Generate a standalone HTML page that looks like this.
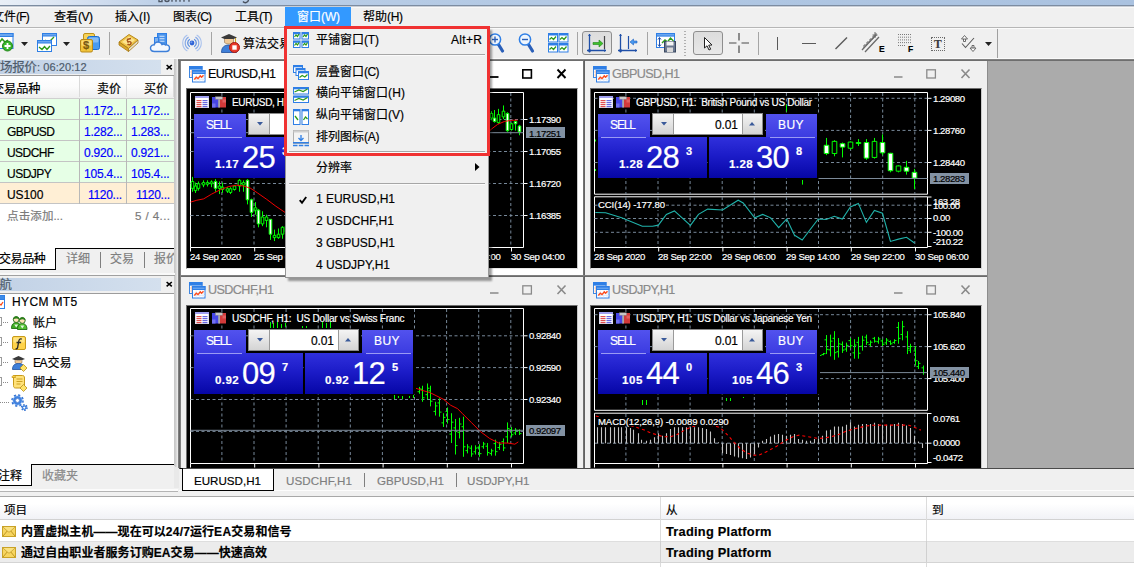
<!DOCTYPE html>
<html><head><meta charset="utf-8"><title>MetaTrader 5</title><style>
*{margin:0;padding:0;box-sizing:border-box}
html,body{width:1134px;height:567px;overflow:hidden;background:#f0f0f0}
body{font-family:"Liberation Sans","Noto Sans CJK SC",sans-serif;font-size:12px;color:#000;position:relative}
#root{position:absolute;left:0;top:0;width:1134px;height:567px;overflow:hidden;background:#f0f0f0}
.a{position:absolute;display:block}
.x{position:absolute;display:block;overflow:visible;white-space:pre;fill:currentColor;color:#000}
.x text{stroke:currentColor;stroke-width:.18px}
.x text{white-space:pre}
svg{overflow:visible}
</style></head>
<body><div id="root">
<div class="a" style="left:0px;top:0px;width:1134px;height:6px;background:linear-gradient(to right,#e9eff7 0,#dfe8f4 4%,#cfdcee 9%,#bdd0e8 14%,#b6cbe5 35%,#b0c7e3 60%,#aac2e0 100%);"></div><svg class="a" style="left:0px;top:0px;" width="300" height="6" viewBox="0 0 300 6"><path d="M159 0v1.600h3v-1.600M165 0c0 2 4 2 4 0M172 0v1.800M176 0v1.800M180 0v1.800M184 0v1.800M189 0v1.800" stroke="#2a2f3a" stroke-width="1.400" fill="none" opacity=".75"/><path d="M243 1.500c1.500 1.800 5 1.500 5.500-1.500" stroke="#2a2f3a" stroke-width="1.500" fill="none" opacity=".8"/></svg><div class="a" style="left:0px;top:5px;width:1134px;height:1px;background:#7c8ca1;"></div><div class="a" style="left:0px;top:6px;width:1134px;height:21px;background:#f0f0f0;"></div><div class="a" style="left:0px;top:6px;width:1134px;height:1px;background:#c9ced6;"></div><div class="a" style="left:0px;top:7px;width:1134px;height:1px;background:#f8f8f8;"></div><div class="a" style="left:0px;top:27px;width:1134px;height:1px;background:#b6b6b6;"></div><div class="a" style="left:285px;top:6.5px;width:66px;height:20.5px;background:#3399ff;"></div><svg class="x" style="left:-7.8px;top:21.1px;font-size:12px;" width="37.8" height="1"><text x="0" textLength="24">文件</text><text x="24" textLength="13.8">(F)</text></svg><svg class="x" style="left:53.7px;top:21.1px;font-size:12px;" width="38.9" height="1"><text x="0" textLength="24">查看</text><text x="24" textLength="14.9">(V)</text></svg><svg class="x" style="left:115.1px;top:21.1px;font-size:12px;" width="35.2" height="1"><text x="0" textLength="24">插入</text><text x="24" textLength="11.2">(I)</text></svg><svg class="x" style="left:173.3px;top:21.1px;font-size:12px;" width="39.1" height="1"><text x="0" textLength="24">图表</text><text x="24" textLength="15.1">(C)</text></svg><svg class="x" style="left:235.4px;top:21.1px;font-size:12px;" width="37.6" height="1"><text x="0" textLength="24">工具</text><text x="24" textLength="13.6">(T)</text></svg><svg class="x" style="left:296.5px;top:21.1px;font-size:12px;color:#fff;" width="43.1" height="1"><text x="0" textLength="24">窗口</text><text x="24" textLength="19.1">(W)</text></svg><svg class="x" style="left:362.5px;top:21.1px;font-size:12px;" width="40.1" height="1"><text x="0" textLength="24">帮助</text><text x="24" textLength="16.1">(H)</text></svg><div class="a" style="left:0px;top:28px;width:1134px;height:30px;background:#f0f0f0;"></div><div class="a" style="left:0px;top:28px;width:1134px;height:1px;background:#fbfbfb;"></div><div class="a" style="left:0px;top:58px;width:1134px;height:1px;background:#fafafa;"></div><svg class="a" style="left:0px;top:32px;overflow:hidden;" width="15" height="21" viewBox="0 0 15 21"><rect x="-8.500" y="1.500" width="21.500" height="15" fill="#fff" stroke="#2f7fe6"/><rect x="-8.500" y="1.500" width="21.500" height="3" fill="#6aa6ee" stroke="#2f7fe6"/><path d="M-7 12L-4 8L-1 11L2 7L5 10L8 8" stroke="#2d9a1a" stroke-width="1.500" fill="none"/><circle cx="7.500" cy="14" r="5" fill="#37b62a" stroke="#1f8417"/><path d="M7.500 11v6M4.500 14h6" stroke="#fff" stroke-width="1.800"/></svg><svg class="a" style="left:20.5px;top:42px;" width="7" height="4" viewBox="0 0 7 4"><path d="M0 0h7l-3.500 4z" fill="#222"/></svg><svg class="a" style="left:37px;top:33px;" width="20" height="19" viewBox="0 0 20 19"><rect x="5.500" y="0.500" width="14" height="12" fill="#fff" stroke="#2f7fe6"/><rect x="5.500" y="0.500" width="14" height="2.500" fill="#6aa6ee" stroke="#2f7fe6"/><path d="M8 7l3 3l6-6" stroke="#2d9a1a" stroke-width="1.300" fill="none"/><rect x="0.500" y="7.500" width="14" height="11" fill="#fff" stroke="#2f7fe6"/><rect x="0.500" y="7.500" width="14" height="2.500" fill="#6aa6ee" stroke="#2f7fe6"/><path d="M2 14l3 2.500l2.500-3l2.500 3l3-3.500" stroke="#2d9a1a" stroke-width="1.400" fill="none"/></svg><svg class="a" style="left:62.8px;top:42px;" width="7" height="4" viewBox="0 0 7 4"><path d="M0 0h7l-3.500 4z" fill="#222"/></svg><svg class="a" style="left:80px;top:33px;" width="20" height="19" viewBox="0 0 20 19"><rect x="3.500" y="0.500" width="11" height="10" rx="1.500" fill="#f6d35a" stroke="#c0931a"/><rect x="7.500" y="3.500" width="12" height="13" rx="2" fill="#4a9bf0" stroke="#1d6fd1"/><rect x="8.500" y="4.500" width="10" height="5" rx="1.500" fill="#9ccbfa" opacity=".7"/><rect x="0.500" y="6.500" width="12" height="12.500" rx="1.500" fill="#f2c43a" stroke="#b8891a"/><rect x="1.500" y="7.500" width="10" height="5" rx="1" fill="#fbe28a" opacity=".8"/></svg><svg class="x b" style="left:83.3px;top:49.3px;font-size:11px;color:#7a5a10;font-weight:bold;" width="6.12" height="1"><text x="0" textLength="6.12">$</text></svg><div class="a" style="left:109px;top:32px;width:1px;height:23px;background:#a5a5a5;"></div><svg class="a" style="left:118px;top:33px;" width="21" height="20" viewBox="0 0 21 20"><path d="M1 9L11 1.500L20 7L10.500 15.500z" fill="#f0c64a" stroke="#b8891a"/><path d="M1 9v3l9.500 6.500v-3z" fill="#d9a62a" stroke="#a87a14" stroke-width=".8"/><path d="M10.500 15.500v3l9.500-8.500v-3z" fill="#e8e0c8" stroke="#a87a14" stroke-width=".8"/><path d="M4 9L11 3.500L17 7L10.500 12.500z" fill="#fbe48e"/><path d="M9 6.500l4-1M9 6.500l1 2.500c2-1 3.500 0 3 1.500s-2.500 1.500-3.500.5" stroke="#a8521a" stroke-width="1.400" fill="none"/></svg><svg class="a" style="left:150px;top:33px;" width="21" height="20" viewBox="0 0 21 20"><rect x="7.500" y="0.500" width="9" height="12" fill="#4a93ea" stroke="#2f7fe6"/><path d="M9.500 3.200h5M9.500 5.700h5M9.500 8.200h5" stroke="#d8e8fb" stroke-width="1.100"/><rect x="4.500" y="4.500" width="4" height="8" fill="#7fb2f0" stroke="#2f7fe6"/><path d="M4.500 18.500c-3 0-4-2-4-3.500s1.500-3.500 3.500-3c.5-2 2-3 4-3s3.500 1 4 2.500c1-.5 2.500-.5 3.500.5c2.500-.5 4 1 4 3s-1.500 3.500-3.500 3.500z" fill="#f4f8fe" stroke="#3d7fd9" stroke-width="1.400"/></svg><svg class="a" style="left:182px;top:33px;" width="20" height="20" viewBox="0 0 20 20"><path d="M7.850 6.280A4.300 4.300 0 0 0 7.850 13.720M12.150 6.280A4.300 4.300 0 0 1 12.150 13.720" stroke="#5c8fe0" stroke-width="1.300" fill="none"/><path d="M6.600 4.110A6.800 6.800 0 0 0 6.600 15.890M13.400 4.110A6.800 6.800 0 0 1 13.400 15.890" stroke="#86a9e6" stroke-width="1.200" fill="none"/><path d="M5.350 1.950A9.300 9.300 0 0 0 5.350 18.050M14.650 1.950A9.300 9.300 0 0 1 14.650 18.050" stroke="#a9c2ee" stroke-width="1.100" fill="none"/><circle cx="10" cy="10" r="2.400" fill="#2f63d6"/><circle cx="9.400" cy="9.300" r="1" fill="#7fa6f0" opacity=".8"/></svg><div class="a" style="left:211px;top:32px;width:1px;height:23px;background:#a5a5a5;"></div><svg class="a" style="left:220px;top:32.500px;" width="21" height="21" viewBox="0 0 21 21"><path d="M1 4.500L9 1L17 4.500L9 8z" fill="#3a3a3a"/><path d="M4.500 6v3.500c2.500 2 6.500 2 9 0v-3.500" fill="#f0c896" stroke="#7a5a3a" stroke-width=".5"/><path d="M15.500 5v5" stroke="#c9a227" stroke-width="1"/><path d="M1.500 19.500c0-5.500 3-7.500 7.500-7.500s7.500 2 7.500 7.500z" fill="#3f7fd8" stroke="#1f4f9a" stroke-width=".8"/><circle cx="14.500" cy="14.500" r="5" fill="#e8392a" stroke="#a81a12"/><rect x="12.300" y="12.300" width="4.400" height="4.400" fill="#fff"/></svg><svg class="x" style="left:243px;top:48.2px;font-size:12px;" width="48" height="1"><text x="0" textLength="48">算法交易</text></svg><svg class="a" style="left:487.500px;top:33px;" width="17" height="20" viewBox="0 0 17 20"><path d="M10.500 11.500l4 6.500" stroke="#2a5fb8" stroke-width="3.200" stroke-linecap="round"/><circle cx="7" cy="6.500" r="5.600" fill="#eef5fd" stroke="#2f7fe6" stroke-width="1.500"/><path d="M4 6.500h6" stroke="#2a5fb8" stroke-width="1.400"/><path d="M7 3.500v6" stroke="#2a5fb8" stroke-width="1.400"/></svg><svg class="a" style="left:518px;top:33px;" width="17" height="20" viewBox="0 0 17 20"><path d="M10.500 11.500l4 6.500" stroke="#2a5fb8" stroke-width="3.200" stroke-linecap="round"/><circle cx="7" cy="6.500" r="5.600" fill="#eef5fd" stroke="#2f7fe6" stroke-width="1.500"/><path d="M4 6.500h6" stroke="#2a5fb8" stroke-width="1.400"/></svg><svg class="a" style="left:548px;top:33px;" width="20" height="19" viewBox="0 0 20 19"><rect x="0.5" y="0.5" width="9" height="8.500" fill="#fff" stroke="#2f7fe6"/><rect x="0.5" y="0.5" width="9" height="2" fill="#2f7fe6"/><path d="M1.5 6.5l2-2l2 2l2.500-3" stroke="#2d9a1a" stroke-width="1.200" fill="none"/><rect x="11.0" y="0.5" width="9" height="8.500" fill="#fff" stroke="#2f7fe6"/><rect x="11.0" y="0.5" width="9" height="2" fill="#2f7fe6"/><path d="M12.0 6.5l2-2l2 2l2.500-3" stroke="#2d9a1a" stroke-width="1.200" fill="none"/><rect x="0.5" y="10.5" width="9" height="8.500" fill="#fff" stroke="#2f7fe6"/><rect x="0.5" y="10.5" width="9" height="2" fill="#2f7fe6"/><path d="M1.5 16.5l2-2l2 2l2.500-3" stroke="#2d9a1a" stroke-width="1.200" fill="none"/><rect x="11.0" y="10.5" width="9" height="8.500" fill="#fff" stroke="#2f7fe6"/><rect x="11.0" y="10.5" width="9" height="2" fill="#2f7fe6"/><path d="M12.0 16.5l2-2l2 2l2.500-3" stroke="#2d9a1a" stroke-width="1.200" fill="none"/></svg><div class="a" style="left:577px;top:32px;width:1px;height:23px;background:#a5a5a5;"></div><div class="a" style="left:582px;top:31px;width:30px;height:24px;background:linear-gradient(#dcdcdc,#e8e8e8);border:1px solid #8e8e8e;border-radius:3px;"></div><svg class="a" style="left:587px;top:34px;" width="20" height="19" viewBox="0 0 20 19"><path d="M2.500 0v18.500M0 16.500h19" stroke="#1f4fa8" stroke-width="1.300" fill="none"/><circle cx="2.500" cy="16.500" r="1.500" fill="#1f4fa8"/><path d="M2.500 0l-1.500 2h3zM19 16.500l-2-1.500v3z" fill="#1f4fa8"/><path d="M17.500 2v13" stroke="#444" stroke-width="1.200"/><path d="M6 8.500h6v-2.500l4 3.500l-4 3.500v-2.500h-6z" fill="#3fc02a" stroke="#1f8417" stroke-width=".6"/></svg><svg class="a" style="left:618px;top:34px;" width="20" height="19" viewBox="0 0 20 19"><path d="M2.500 0v18.500M0 16.500h19" stroke="#1f4fa8" stroke-width="1.300" fill="none"/><circle cx="2.500" cy="16.500" r="1.500" fill="#1f4fa8"/><path d="M2.500 0l-1.500 2h3zM19 16.500l-2-1.500v3z" fill="#1f4fa8"/><path d="M10.500 2v13" stroke="#1f4fa8" stroke-width="1.200"/><path d="M19 7h-3.500v-2l-3.500 3l3.500 3v-2h3.500z" fill="#4a9bf0" stroke="#1d5fc1" stroke-width=".6"/></svg><div class="a" style="left:647px;top:32px;width:1px;height:23px;background:#a5a5a5;"></div><svg class="a" style="left:656px;top:33px;" width="20" height="20" viewBox="0 0 20 20"><rect x="0.500" y="0.500" width="18" height="14" fill="#fff" stroke="#2f7fe6"/><rect x="0.500" y="0.500" width="18" height="2.600" fill="#6aa6ee" stroke="#2f7fe6"/><path d="M3.500 5v8M2 6.500l1.500-2l1.500 2M2 11.500l1.500 2l1.500-2" stroke="#1f4fa8" stroke-width="1" fill="none"/><path d="M6 10l3-3l2.500 2l3-4l3 3" stroke="#2d9a1a" stroke-width="1.400" fill="none"/><rect x="8.500" y="8.500" width="11" height="10.500" fill="#6a7890" stroke="#3a4860"/><rect x="10.500" y="8.500" width="7" height="4" fill="#f4f4f4"/><rect x="11" y="14.500" width="6" height="4.500" fill="#d8d8d8"/></svg><svg class="a" style="left:684px;top:31px;" width="3" height="25" viewBox="0 0 3 25"><path d="M1 0v25" stroke="#b0b0b0" stroke-width="2" stroke-dasharray="1 2"/></svg><div class="a" style="left:693px;top:31px;width:30px;height:24px;background:linear-gradient(#dcdcdc,#e8e8e8);border:1px solid #8e8e8e;border-radius:3px;"></div><svg class="a" style="left:703.500px;top:36.500px;" width="9" height="14" viewBox="0 0 9 14"><path d="M0.500 0.500v10.500l2.500-2.200l2 4.200l1.700-.8l-2-4l3.300-.2z" fill="#fff" stroke="#222" stroke-width="1"/></svg><svg class="a" style="left:729px;top:33px;" width="20" height="20" viewBox="0 0 20 20"><path d="M10 0v7.500M10 12.500v7.500M0 10h7.500M12.500 10h7.500" stroke="#4a4a4a" stroke-width="1.200"/></svg><div class="a" style="left:758px;top:32px;width:1px;height:23px;background:#a5a5a5;"></div><div class="a" style="left:776.500px;top:37px;width:1.300px;height:12.500px;background:#5a5a5a;"></div><div class="a" style="left:802px;top:42.500px;width:14px;height:1.300px;background:#5a5a5a;"></div><svg class="a" style="left:835px;top:37px;" width="13" height="13" viewBox="0 0 13 13"><path d="M0.500 12L12 0.500" stroke="#5a5a5a" stroke-width="1.500"/></svg><svg class="a" style="left:862px;top:32px;" width="22" height="21" viewBox="0 0 22 21"><path d="M0 18L14 3M3 20L17 5" stroke="#6a6a6a" stroke-width="1.300"/><path d="M2 16v-3h3v-3h3v-3h3v-3h3v-3" stroke="#6a6a6a" stroke-width="1" fill="none"/><path d="M13 0v6M10.500 3h5" stroke="#6a6a6a" stroke-width="1"/></svg><svg class="x b" style="left:878.5px;top:52px;font-size:8.5px;font-weight:bold;" width="5.67" height="1"><text x="0" textLength="5.67">E</text></svg><svg class="a" style="left:897.500px;top:34px;" width="14" height="13" viewBox="0 0 14 13"><path d="M0 0.5h14" stroke="#7a7a7a" stroke-width="1" stroke-dasharray="1 1"/><path d="M0 3.2h14" stroke="#7a7a7a" stroke-width="1" stroke-dasharray="1 1"/><path d="M0 5.9h14" stroke="#7a7a7a" stroke-width="1" stroke-dasharray="1 1"/><path d="M0 8.600000000000001h14" stroke="#7a7a7a" stroke-width="1" stroke-dasharray="1 1"/><path d="M0 11.500h7" stroke="#7a7a7a" stroke-width="1" stroke-dasharray="1 1"/></svg><svg class="x b" style="left:907.5px;top:52px;font-size:8.5px;font-weight:bold;" width="5.19" height="1"><text x="0" textLength="5.19">F</text></svg><div class="a" style="left:930.500px;top:36.500px;width:14px;height:14px;border:1px dotted #6a6a6a;"></div><svg class="x b" style="left:933.8px;top:48.3px;font-size:11.5px;color:#3a3a3a;font-weight:bold;font-family:'Liberation Serif',serif;" width="7.67" height="1"><text x="0" textLength="7.67">T</text></svg><svg class="a" style="left:961px;top:35px;" width="16" height="17" viewBox="0 0 16 17"><path d="M3.500 0.500l3 3.500h-6zM2.500 4v2.500h2v-2.500" fill="#fff" stroke="#5a5a5a" stroke-width=".9"/><path d="M1 8.500l3.500 4L13 3" stroke="#5a5a5a" stroke-width="1.100" fill="none"/><path d="M12 16.500l-3-3.500h6zM11 13v-2.500h2v2.500" fill="#fff" stroke="#5a5a5a" stroke-width=".9"/></svg><svg class="a" style="left:984.5px;top:42px;" width="7" height="4" viewBox="0 0 7 4"><path d="M0 0h7l-3.500 4z" fill="#222"/></svg><div class="a" style="left:997px;top:29px;width:1px;height:29px;background:#a0a0a0;"></div><div class="a" style="left:0px;top:59px;width:175px;height:408px;background:#f0f0f0;"></div><div class="a" style="left:0px;top:60.200px;width:161px;height:13.700px;background:linear-gradient(to right,#c2d2e6,#d4e0ee);"></div><svg class="x" style="left:-12.4px;top:71.4px;font-size:12.6px;color:#4d5b6b;" width="48.8" height="1"><text x="0" textLength="48.8">市场报价</text></svg><svg class="x" style="left:36.8px;top:71.2px;font-size:11px;color:#4d5b6b;" width="49.6" height="1"><text x="0" textLength="49.6">: 06:20:12</text></svg><svg class="a" style="left:166px;top:64px;" width="7" height="7" viewBox="0 0 7 7"><path d="M0.600 1L5.800 5.400M5.800 1L0.600 5.400" stroke="#000" stroke-width="1.600" fill="none"/></svg><div class="a" style="left:0px;top:75px;width:174px;height:1px;background:#9c9c9c;"></div><div class="a" style="left:0px;top:76px;width:174px;height:22px;background:linear-gradient(#ffffff,#fbfbfb 50%,#efefef);"></div><div class="a" style="left:0px;top:98px;width:174px;height:1px;background:#d0d0d0;"></div><div class="a" style="left:79px;top:76px;width:1px;height:21px;background:#dadada;"></div><div class="a" style="left:126px;top:76px;width:1px;height:21px;background:#dadada;"></div><div class="a" style="left:173px;top:76px;width:1px;height:21px;background:#dadada;"></div><svg class="x" style="left:-8px;top:92.7px;font-size:12.2px;" width="48.4" height="1"><text x="0" textLength="48.4">交易品种</text></svg><svg class="x" style="left:96.8px;top:92.7px;font-size:12px;" width="24" height="1"><text x="0" textLength="24">卖价</text></svg><svg class="x" style="left:143.6px;top:92.7px;font-size:12px;" width="24" height="1"><text x="0" textLength="24">买价</text></svg><div class="a" style="left:0px;top:99px;width:174px;height:20.200px;background:#e6ffe6;"></div><div class="a" style="left:0px;top:119.200px;width:174px;height:1px;background:#c4c4c4;"></div><div class="a" style="left:79px;top:99px;width:1px;height:21px;background:#b8b8b8;"></div><div class="a" style="left:126px;top:99px;width:1px;height:21px;background:#b8b8b8;"></div><svg class="x" style="left:7.3px;top:114.8px;font-size:12px;" width="47.89" height="1"><text x="0" textLength="47.89">EURUSD</text></svg><svg class="x" style="left:83.7px;top:114.8px;font-size:12px;color:#0000ff;" width="38.6" height="1"><text x="0" textLength="38.6">1.172...</text></svg><svg class="x" style="left:130.9px;top:114.8px;font-size:12px;color:#0000ff;" width="38.6" height="1"><text x="0" textLength="38.6">1.172...</text></svg><div class="a" style="left:0px;top:120.050px;width:174px;height:20.200px;background:#e6ffe6;"></div><div class="a" style="left:0px;top:140.250px;width:174px;height:1px;background:#c4c4c4;"></div><div class="a" style="left:79px;top:120.050px;width:1px;height:21px;background:#b8b8b8;"></div><div class="a" style="left:126px;top:120.050px;width:1px;height:21px;background:#b8b8b8;"></div><svg class="x" style="left:7.3px;top:135.85px;font-size:12px;" width="47.89" height="1"><text x="0" textLength="47.89">GBPUSD</text></svg><svg class="x" style="left:83.7px;top:135.85px;font-size:12px;color:#0000ff;" width="38.6" height="1"><text x="0" textLength="38.6">1.282...</text></svg><svg class="x" style="left:130.9px;top:135.85px;font-size:12px;color:#0000ff;" width="38.6" height="1"><text x="0" textLength="38.6">1.283...</text></svg><div class="a" style="left:0px;top:141.100px;width:174px;height:20.200px;background:#e6ffe6;"></div><div class="a" style="left:0px;top:161.300px;width:174px;height:1px;background:#c4c4c4;"></div><div class="a" style="left:79px;top:141.100px;width:1px;height:21px;background:#b8b8b8;"></div><div class="a" style="left:126px;top:141.100px;width:1px;height:21px;background:#b8b8b8;"></div><svg class="x" style="left:7.3px;top:156.9px;font-size:12px;" width="47.25" height="1"><text x="0" textLength="47.25">USDCHF</text></svg><svg class="x" style="left:83.7px;top:156.9px;font-size:12px;color:#0000ff;" width="38.6" height="1"><text x="0" textLength="38.6">0.920...</text></svg><svg class="x" style="left:130.9px;top:156.9px;font-size:12px;color:#0000ff;" width="38.6" height="1"><text x="0" textLength="38.6">0.921...</text></svg><div class="a" style="left:0px;top:162.150px;width:174px;height:20.200px;background:#e6ffe6;"></div><div class="a" style="left:0px;top:182.350px;width:174px;height:1px;background:#c4c4c4;"></div><div class="a" style="left:79px;top:162.150px;width:1px;height:21px;background:#b8b8b8;"></div><div class="a" style="left:126px;top:162.150px;width:1px;height:21px;background:#b8b8b8;"></div><svg class="x" style="left:7.3px;top:177.95px;font-size:12px;" width="44.74" height="1"><text x="0" textLength="44.74">USDJPY</text></svg><svg class="x" style="left:83.7px;top:177.95px;font-size:12px;color:#0000ff;" width="38.6" height="1"><text x="0" textLength="38.6">105.4...</text></svg><svg class="x" style="left:130.9px;top:177.95px;font-size:12px;color:#0000ff;" width="38.6" height="1"><text x="0" textLength="38.6">105.4...</text></svg><div class="a" style="left:0px;top:183.200px;width:174px;height:20.200px;background:#ffefd5;"></div><div class="a" style="left:0px;top:203.400px;width:174px;height:1px;background:#c4c4c4;"></div><div class="a" style="left:79px;top:183.200px;width:1px;height:21px;background:#b8b8b8;"></div><div class="a" style="left:126px;top:183.200px;width:1px;height:21px;background:#b8b8b8;"></div><svg class="x" style="left:7.3px;top:199px;font-size:12px;" width="36.4" height="1"><text x="0" textLength="36.4">US100</text></svg><svg class="x" style="left:88.3px;top:199px;font-size:12px;color:#0000ff;" width="34" height="1"><text x="0" textLength="34">1120...</text></svg><svg class="x" style="left:135.5px;top:199px;font-size:12px;color:#0000ff;" width="34" height="1"><text x="0" textLength="34">1120...</text></svg><div class="a" style="left:0px;top:204.450px;width:174px;height:43.750px;background:#fff;"></div><svg class="x" style="left:7.3px;top:219.85px;font-size:11.5px;color:#7a7a7a;" width="55.98" height="1"><text x="0" textLength="46.4">点击添加</text><text x="46.4" textLength="9.58">...</text></svg><svg class="x" style="left:134.5px;top:219.85px;font-size:11.5px;color:#7a7a7a;" width="35" height="1"><text x="0" textLength="35">5 / 4...</text></svg><div class="a" style="left:0px;top:248px;width:174px;height:1px;background:#000;"></div><div class="a" style="left:0px;top:249px;width:174px;height:21px;background:#f0f0f0;"></div><div class="a" style="left:0px;top:248px;width:55.500px;height:22px;background:#fff;border-right:1px solid #000;border-bottom:1px solid #000;"></div><div class="a" style="left:0px;top:248px;width:54px;height:1px;background:#fff;"></div><svg class="x" style="left:-1px;top:262.5px;font-size:12px;" width="46.8" height="1"><text x="0" textLength="46.8">交易品种</text></svg><svg class="x" style="left:65.5px;top:262.5px;font-size:12px;color:#7f7f7f;" width="24" height="1"><text x="0" textLength="24">详细</text></svg><div class="a" style="left:100px;top:252px;width:1px;height:15.500px;background:#7f7f7f;"></div><svg class="x" style="left:109.5px;top:262.5px;font-size:12px;color:#7f7f7f;" width="24" height="1"><text x="0" textLength="24">交易</text></svg><div class="a" style="left:144px;top:252px;width:1px;height:15.500px;background:#7f7f7f;"></div><div class="a" style="left:150px;top:249px;width:24px;height:20px;overflow:hidden"><div class="a" style="left:-150px;top:-249px;width:1134px;height:567px"><svg class="x" style="left:153.5px;top:262.5px;font-size:12px;color:#7f7f7f;" width="24" height="1"><text x="0" textLength="24">报价</text></svg></div></div><div class="a" style="left:174px;top:59px;width:1px;height:411px;background:#c9c9c9;"></div><div class="a" style="left:0px;top:272.500px;width:178px;height:2.500px;background:#f9f9f9;"></div><div class="a" style="left:0px;top:275px;width:178px;height:1px;background:#a0a0a0;"></div><div class="a" style="left:0px;top:277.500px;width:161px;height:13.500px;background:linear-gradient(to right,#c2d2e6,#d4e0ee);"></div><svg class="x" style="left:-13.5px;top:288.8px;font-size:12.4px;color:#4d5b6b;" width="24.8" height="1"><text x="0" textLength="24.8">导航</text></svg><svg class="a" style="left:166px;top:281px;" width="7" height="7" viewBox="0 0 7 7"><path d="M0.600 1L5.800 5.400M5.800 1L0.600 5.400" stroke="#000" stroke-width="1.600" fill="none"/></svg><div class="a" style="left:0px;top:292.500px;width:174px;height:1px;background:#9c9c9c;"></div><div class="a" style="left:0px;top:293.500px;width:174px;height:171px;background:#fff;"></div><svg class="a" style="left:0px;top:0px;overflow:hidden;" width="20" height="567" viewBox="0 0 20 567"><rect x="-6.5" y="317.5" width="8" height="8" fill="#fff" stroke="#9a9a9a"/><path d="M-4.5 322h4" stroke="#333" stroke-width="1"/><path d="M3 322.5h6" stroke="#8a8a8a" stroke-width="1" stroke-dasharray="1 1"/><rect x="-6.5" y="337.5" width="8" height="8" fill="#fff" stroke="#9a9a9a"/><path d="M-4.5 342h4" stroke="#333" stroke-width="1"/><path d="M3 342.5h6" stroke="#8a8a8a" stroke-width="1" stroke-dasharray="1 1"/><rect x="-6.5" y="357.5" width="8" height="8" fill="#fff" stroke="#9a9a9a"/><path d="M-4.5 362h4" stroke="#333" stroke-width="1"/><path d="M3 362.5h6" stroke="#8a8a8a" stroke-width="1" stroke-dasharray="1 1"/><rect x="-6.5" y="377.5" width="8" height="8" fill="#fff" stroke="#9a9a9a"/><path d="M-4.5 382h4" stroke="#333" stroke-width="1"/><path d="M3 382.5h6" stroke="#8a8a8a" stroke-width="1" stroke-dasharray="1 1"/><path d="M0 402.500h10" stroke="#8a8a8a" stroke-width="1" stroke-dasharray="1 1"/></svg><svg class="a" style="left:0px;top:295px;overflow:hidden;" width="8" height="15" viewBox="0 0 8 15"><rect x="-5.500" y="0.500" width="10" height="5" fill="#3d8be8" stroke="#2f7fe6"/><rect x="-5.500" y="4.500" width="10" height="9" fill="#fff" stroke="#2f7fe6"/><path d="M-3 11L-1 8.500L1 10L3 7" stroke="#ff4a1a" stroke-width="1.300" fill="none"/></svg><svg class="a" style="left:10.500px;top:314.500px;" width="17" height="15" viewBox="0 0 17 15"><path d="M0.500 13.500c0-4 1.800-6 4.700-6s4.600 2 4.600 6z" fill="#3fae22" stroke="#1f6d12" stroke-width=".9"/><path d="M6.500 14.500c0-4 2-6 4.800-6s4.700 2 4.700 6z" fill="#52c030" stroke="#1f6d12" stroke-width=".9"/><path d="M3.200 9.500l2 3l2-3M9.300 10.500l2 3l2-3" fill="#fff" stroke="none" opacity=".85"/><circle cx="5.200" cy="4.600" r="2.900" fill="#ffe2b8" stroke="#1f6d12" stroke-width=".9"/><circle cx="11.300" cy="5.500" r="2.900" fill="#ffe2b8" stroke="#1f6d12" stroke-width=".9"/><path d="M2.300 4.200c.4-3.600 5.400-3.600 5.800 0c-1.800-1.400-4-1.400-5.800 0zM8.400 5.100c.4-3.600 5.400-3.600 5.800 0c-1.800-1.400-4-1.400-5.800 0z" fill="#2c8a1a" stroke="#1f6d12" stroke-width=".5"/></svg><svg class="a" style="left:11.500px;top:335.500px;" width="14" height="14" viewBox="0 0 14 14"><rect x="0.500" y="0.500" width="13" height="13" rx="1.500" fill="#ffd34a" stroke="#c79a1a"/><rect x="1.500" y="1.500" width="11" height="5" rx="1" fill="#ffe88e" opacity=".8"/><path d="M9.800 3.200c-2.200-.8-2.800.6-3.100 2.300L5.600 11.500c-.3 1.200-1 1.500-2 1.100M4.500 6.500h4.600" stroke="#2a2a2a" stroke-width="1.300" fill="none"/></svg><svg class="a" style="left:10.500px;top:353.500px;" width="17" height="18" viewBox="0 0 17 18"><path d="M1 5L7.500 2L14 5L7.500 7.600z" fill="#3a3a3a"/><path d="M4 6.200v2.500c2 1.500 5 1.500 7 0v-2.500" fill="#f0c896" stroke="#7a5a3a" stroke-width=".5"/><path d="M1.500 15.500c0-4.500 2.500-6 6-6s6 1.500 6 6z" fill="#3f7fd8" stroke="#1f4f9a" stroke-width=".8"/><path d="M12.500 10.500l3.500 3.500l-3.500 3.500l-3.500-3.500z" fill="#ffe36a" stroke="#b8901c" stroke-width=".8"/></svg><svg class="a" style="left:10.500px;top:373.500px;" width="17" height="18" viewBox="0 0 17 18"><path d="M2.500 1.500h9c1.500 0 2 1 2 2.500v10h-9c-1.500 0-2-1-2-2.500z" fill="#ffe27a" stroke="#c79a1a"/><path d="M1 3.500c0-1.500 1-2 2-2s1.500 1 1.500 2z" fill="#ffd34a" stroke="#c79a1a" stroke-width=".8"/><path d="M5.500 5h6M5.500 7.500h6M5.500 10h4" stroke="#c79a1a" stroke-width=".9"/><path d="M12.500 10.500l3.500 3.500l-3.500 3.500l-3.500-3.500z" fill="#ffe36a" stroke="#b8901c" stroke-width=".8"/></svg><svg class="a" style="left:10.500px;top:394px;" width="17" height="17" viewBox="0 0 17 17"><circle cx="6.500" cy="6.500" r="5.200" fill="none" stroke="#2f6fd0" stroke-width="2.200" stroke-dasharray="2.040 2.040"/><circle cx="6.500" cy="6.500" r="3.300" fill="none" stroke="#3f82e0" stroke-width="2.600"/><circle cx="6.500" cy="6.500" r="2" fill="#fff" stroke="#2a62c0" stroke-width=".6"/><circle cx="6.500" cy="6.500" r="4.700" fill="none" stroke="#9cc4f6" stroke-width=".7" opacity=".8"/><circle cx="13.300" cy="13.600" r="2.700" fill="none" stroke="#2f6fd0" stroke-width="1.600" stroke-dasharray="1.410 1.410"/><circle cx="13.300" cy="13.600" r="1.700" fill="none" stroke="#3f82e0" stroke-width="1.500"/><circle cx="13.300" cy="13.600" r=".9" fill="#fff"/></svg><svg class="x" style="left:12.1px;top:306.3px;font-size:12px;" width="65.2" height="1"><text x="0" textLength="65.2">HYCM MT5</text></svg><svg class="x" style="left:33px;top:327.3px;font-size:12px;" width="24" height="1"><text x="0" textLength="24">帐户</text></svg><svg class="x" style="left:33px;top:347.3px;font-size:12px;" width="24" height="1"><text x="0" textLength="24">指标</text></svg><svg class="x" style="left:33px;top:367.3px;font-size:12px;" width="38.5" height="1"><text x="0" textLength="14.5">EA</text><text x="14.5" textLength="24">交易</text></svg><svg class="x" style="left:33px;top:387.3px;font-size:12px;" width="24" height="1"><text x="0" textLength="24">脚本</text></svg><svg class="x" style="left:33px;top:407.3px;font-size:12px;" width="24" height="1"><text x="0" textLength="24">服务</text></svg><div class="a" style="left:0px;top:464px;width:174px;height:1px;background:#000;"></div><div class="a" style="left:0px;top:465px;width:174px;height:22px;background:#f0f0f0;"></div><div class="a" style="left:0px;top:464px;width:32px;height:22px;background:#fff;border-right:1px solid #000;border-bottom:1px solid #000;"></div><div class="a" style="left:0px;top:464px;width:31px;height:1px;background:#fff;"></div><svg class="x" style="left:-2px;top:479.6px;font-size:12px;" width="24" height="1"><text x="0" textLength="24">注释</text></svg><svg class="x" style="left:42px;top:479.6px;font-size:12px;color:#8a8a8a;" width="36" height="1"><text x="0" textLength="36">收藏夹</text></svg><div class="a" style="left:174px;top:466px;width:5px;height:22px;background:#e9e9e9;"></div><div class="a" style="left:175px;top:59px;width:3px;height:408px;background:linear-gradient(to right,#c8c8c8,#f0f0f0);"></div><div class="a" style="left:178px;top:59px;width:3px;height:409px;background:linear-gradient(to right,#8a8a8a,#5f5f5f 60%,#9a9a9a);"></div><div class="a" style="left:178px;top:59px;width:956px;height:2px;background:linear-gradient(#8c8c8c,#646464);"></div><div class="a" style="left:181px;top:61px;width:953px;height:407px;background:#ababab;"></div><div class="a" style="left:0;top:0;width:1134px;height:468px;overflow:hidden"><div class="a" style="left:987px;top:61px;width:1px;height:407px;background:#8c8c8c;"></div><div class="a" style="left:181px;top:61px;width:402px;height:214px;background:#fff;"></div><div class="a" style="left:583px;top:60px;width:2px;height:217px;background:linear-gradient(to right,#7a7a7a,#5a5a5a);"></div><div class="a" style="left:181px;top:275px;width:404px;height:2px;background:linear-gradient(#8a8a8a,#5f5f5f);"></div><svg class="a" style="left:189px;top:66px;" width="17" height="17" viewBox="0 0 17 17"><rect x="0.500" y="0.500" width="12.500" height="11" fill="#fff" stroke="#3f86e0"/><rect x="0.500" y="0.500" width="12.500" height="2.600" fill="#2f7fe6" stroke="#2f7fe6"/><path d="M1 6h3M1 9h3M2.500 4v7" stroke="#f0b8a0" stroke-width=".6"/><rect x="3.500" y="4.500" width="12.500" height="11.500" fill="#fff" stroke="#2f7fe6"/><rect x="3.500" y="4.500" width="12.500" height="3" fill="#2f7fe6" stroke="#2f7fe6"/><path d="M4 6.200h11.500" stroke="#8fc0f8" stroke-width=".8"/><path d="M7.200 8.500v7M10.700 8.500v7M14 8.500v7M4 11h12M4 13.500h12" stroke="#d5e3f5" stroke-width=".6" fill="none"/><path d="M5.300 13.500L7.300 11.300L9 12.600L11.300 9.800L12.500 11.200L14.500 9.300" stroke="#ff4a1a" stroke-width="1.400" fill="none"/></svg><svg class="x" style="left:208.4px;top:77.9px;font-size:12.6px;" width="67.99" height="1"><text x="0" textLength="67.99">EURUSD,H1</text></svg><svg class="a" style="left:0px;top:0px;" width="600" height="100" viewBox="0 0 600 100"><path d="M490 77h8.500" stroke="#000" stroke-width="1.8"/><rect x="522.800" y="69.800" width="8.600" height="8.200" fill="none" stroke="#000" stroke-width="1.6"/><path d="M557.500 69.500l8 8.500M565.500 69.500l-8 8.500" stroke="#000" stroke-width="1.9000000000000001" fill="none"/></svg><div class="a" style="left:186px;top:88px;width:392px;height:181px;background:#000;border-left:1px solid #6e6e6e;border-top:1px solid #6e6e6e;border-right:1px solid #c8c8c8;border-bottom:1px solid #e8e8e8;"></div><svg class="a" style="left:0;top:0" width="1134" height="468" viewBox="0 0 1134 468"><path d="M190.5 247.5V92.5H523.5V247.5z" stroke="#fff" stroke-width="1" fill="none"/><path d="M221.9 93V247M254 93V247M286.1 93V247M318.2 93V247M350.3 93V247M382.4 93V247M414.5 93V247M446.6 93V247M478.7 93V247M510.8 93V247M190.5 119.5H523.5M190.5 151.5H523.5M190.5 183.5H523.5M190.5 215.5H523.5" stroke="#778899" stroke-width="1" stroke-dasharray="3 2.500" fill="none"/><path d="M192.5 176.88V191.78M195.5 182.61V192.93M198.5 181.46V190.63M203.5 180.32V187.19M207.5 180.32V186.51M211.5 180.32V187.19M215.5 179.17V191.78M219.5 181.46V194.07M222.5 182.61V192.93M227.5 187.19V192.93M230.5 187.19V194.07M234.5 184.9V190.63M239.5 179.17V191.78M243.5 180.32V191.78M247.5 179.17V204.39M251.5 198.66V217M255.5 202.1V214.7M258.5 208.97V227.31M262.5 211.27V226.17M266.5 214.7V227.31M270.5 219.29V239.92M274.5 229.61V241.07M278.5 228.46V238.78M282.5 226.17V238.78M286.5 223.87V236.48" stroke="#00ff00" stroke-width="1" fill="none"/><path d="M191.2 181.46h2.6v6.88h-2.6zM194.2 186.05h2.6v4.59h-2.6zM197.2 183.76h2.6v4.59h-2.6zM202.2 182.61h2.6v2.29h-2.6zM206.2 182.61h2.6v1.6h-2.6zM210.2 181.92h2.6v1.83h-2.6zM218.2 186.05h2.6v2.29h-2.6zM221.2 187.19h2.6v2.29h-2.6zM226.2 188.8h2.6v2.29h-2.6zM229.2 188.8h2.6v3.67h-2.6zM233.2 186.05h2.6v3.44h-2.6zM238.2 180.32h2.6v5.73h-2.6zM242.2 182.61h2.6v2.29h-2.6zM254.2 207.83h2.6v2.29h-2.6zM261.2 217h2.6v6.88h-2.6zM265.2 217h2.6v3.44h-2.6zM273.2 235.34h2.6v2.29h-2.6zM277.2 234.19h2.6v3.44h-2.6zM281.2 227.31h2.6v6.88h-2.6zM285.2 226.17h2.6v5.73h-2.6z" stroke="#00ff00" stroke-width="1" fill="#000"/><path d="M214.2 181.46h2.6v6.88h-2.6zM246.2 180.32h2.6v19.49h-2.6zM250.2 199.8h2.6v12.61h-2.6zM257.2 210.12h2.6v13.76h-2.6zM269.2 219.29h2.6v14.9h-2.6z" stroke="#00ff00" stroke-width="1" fill="#fff"/><path d="M190.59 202.1L196.78 200.26L203.66 198.89L211.68 194.07L220.85 189.49L228.87 186.51L236.9 185.13L243.78 186.05L250.65 188.34L257.53 192.93L266.7 199.34L275.87 206.22L285.04 212.41L289.63 215.85" stroke="#ff0000" stroke-width="0.95" fill="none"/><path d="M491.5 111.17V120.34M494.5 110.02V122.63M498.5 108.87V123.78M503.5 105.44V119.19M507.5 112.31V131.8M511.5 122.63V130.65M515.5 120.34V130.65M519.5 124.92V135.24" stroke="#00ff00" stroke-width="1" fill="none"/><path d="M490.2 113.46h2.6v4.59h-2.6zM497.2 114.61h2.6v8.02h-2.6zM502.2 111.17h2.6v5.73h-2.6zM510.2 123.78h2.6v5.73h-2.6z" stroke="#00ff00" stroke-width="1" fill="#000"/><path d="M493.2 118.04h2.6v3.44h-2.6zM506.2 113.46h2.6v17.19h-2.6zM514.2 121.48h2.6v2.29h-2.6zM518.2 126.07h2.6v5.73h-2.6z" stroke="#00ff00" stroke-width="1" fill="#fff"/><path d="M486.05 134.09L491.78 128.82L497.51 124.46L504.39 121.48L511.27 120.34L517.68 120.11" stroke="#ff0000" stroke-width="0.95" fill="none"/><path d="M190.5 247.5v4M254.7 247.5v4M318.9 247.5v4M383.1 247.5v4M447.3 247.5v4M511.5 247.5v4" stroke="#fff" stroke-width="1"/><path d="M523.5 119.5h4M523.5 151.5h4M523.5 183.5h4M523.5 215.5h4" stroke="#fff" stroke-width="1"/><path d="M190.5 132.7H523.5" stroke="#7c8a99" stroke-width="1"/></svg><svg class="a" style="left:194.500px;top:95.800px;" width="32" height="12" viewBox="0 0 32 12"><rect x="0.500" y="0.500" width="13" height="11" fill="#fff" stroke="#e0e0ee"/><rect x="0" y="0" width="14" height="2" fill="#a0a0f0"/><rect x="1.5" y="4" width="5" height="1.2" fill="#e05050"/><rect x="7.5" y="4" width="5" height="1.2" fill="#6868e0"/><rect x="1.5" y="6" width="5" height="1.2" fill="#e05050"/><rect x="7.5" y="6" width="5" height="1.2" fill="#6868e0"/><rect x="1.5" y="8" width="5" height="1.2" fill="#e05050"/><rect x="7.5" y="8" width="5" height="1.2" fill="#6868e0"/><rect x="1.5" y="10" width="5" height="1.2" fill="#e05050"/><rect x="7.5" y="10" width="5" height="1.2" fill="#6868e0"/><rect x="17" y="1" width="7" height="10.500" fill="#4646e6"/><rect x="24" y="1" width="7" height="10.500" fill="#d23a3a"/><path d="M17 7.500h3.500v4h-3.500z" fill="#7070f0"/><path d="M27.500 3.500h3.500v3h-3.500z" fill="#e06060"/><rect x="20.500" y="0.800" width="7" height="2.400" fill="#c9c9c9" stroke="#8a8a8a" stroke-width=".5"/><rect x="23.200" y="3.200" width="1.800" height="8.300" fill="#a8a8a8"/></svg><svg class="x" style="left:231.8px;top:106px;font-size:10px;color:#fff;" width="137.57" height="1"><text x="0" textLength="137.57">EURUSD, H1:  Euro vs US Dollar</text></svg><svg class="x" style="left:189.8px;top:259.9px;font-size:9.6px;color:#fff;" width="51.3" height="1"><text x="0" textLength="51.3">24 Sep 2020</text></svg><svg class="x" style="left:254px;top:259.9px;font-size:9.6px;color:#fff;" width="53.82" height="1"><text x="0" textLength="53.82">25 Sep 04:00</text></svg><svg class="x" style="left:318.2px;top:259.9px;font-size:9.6px;color:#fff;" width="53.82" height="1"><text x="0" textLength="53.82">25 Sep 20:00</text></svg><svg class="x" style="left:382.4px;top:259.9px;font-size:9.6px;color:#fff;" width="53.82" height="1"><text x="0" textLength="53.82">28 Sep 12:00</text></svg><svg class="x" style="left:446.6px;top:259.9px;font-size:9.6px;color:#fff;" width="53.82" height="1"><text x="0" textLength="53.82">29 Sep 12:00</text></svg><svg class="x" style="left:510.8px;top:259.9px;font-size:9.6px;color:#fff;" width="53.82" height="1"><text x="0" textLength="53.82">30 Sep 04:00</text></svg><svg class="x" style="left:529.2px;top:123px;font-size:9.6px;color:#fff;" width="32.05" height="1"><text x="0" textLength="32.05">1.17390</text></svg><svg class="x" style="left:529.2px;top:155px;font-size:9.6px;color:#fff;" width="32.05" height="1"><text x="0" textLength="32.05">1.17055</text></svg><svg class="x" style="left:529.2px;top:187px;font-size:9.6px;color:#fff;" width="32.05" height="1"><text x="0" textLength="32.05">1.16720</text></svg><svg class="x" style="left:529.2px;top:219px;font-size:9.6px;color:#fff;" width="32.05" height="1"><text x="0" textLength="32.05">1.16385</text></svg><div class="a" style="left:526.100px;top:127px;width:39.200px;height:11.200px;background:#8392a3;"></div><svg class="x" style="left:529.2px;top:136.5px;font-size:9.6px;" width="32.05" height="1"><text x="0" textLength="32.05">1.17251</text></svg><div class="a" style="left:194px;top:113.500px;width:52px;height:24px;background:linear-gradient(#5252ee,#3b3be0);"></div><div class="a" style="left:362px;top:113.500px;width:50.600px;height:24px;background:linear-gradient(#5252ee,#3b3be0);"></div><div class="a" style="left:194px;top:137px;width:108.500px;height:40.800px;background:linear-gradient(#3030dc,#1c1cc8 45%,#0606a6);"></div><div class="a" style="left:305.300px;top:137px;width:107.300px;height:40.800px;background:linear-gradient(#3030dc,#1c1cc8 45%,#0606a6);"></div><div class="a" style="left:197px;top:136.600px;width:45px;height:1px;background:#9a9af4;"></div><div class="a" style="left:366px;top:136.600px;width:45px;height:1px;background:#9a9af4;"></div><div class="a" style="left:412.600px;top:113px;width:3.200px;height:65px;background:#000;"></div><div class="a" style="left:248px;top:113px;width:111px;height:22px;background:#fff;border:1px solid #8a8a8a;"></div><div class="a" style="left:249px;top:114px;width:20.500px;height:20px;background:linear-gradient(#f4f4f4,#d4d4d4);border-right:1px solid #9a9a9a;"></div><div class="a" style="left:337.500px;top:114px;width:20.500px;height:20px;background:linear-gradient(#f4f4f4,#d4d4d4);border-left:1px solid #9a9a9a;"></div><svg class="a" style="left:256.500px;top:122px;" width="6" height="4" viewBox="0 0 6 4"><path d="M0 0h6l-3 3.500z" fill="#3a5a9a"/></svg><svg class="a" style="left:345px;top:122px;" width="6" height="4" viewBox="0 0 6 4"><path d="M0 3.500h6l-3-3.500z" fill="#3a5a9a"/></svg><svg class="x" style="left:310.5px;top:129px;font-size:12px;" width="23" height="1"><text x="0" textLength="23">0.01</text></svg><svg class="x" style="left:206.2px;top:128.8px;font-size:12px;color:#fff;" width="26" height="1"><text x="0" textLength="26">SELL</text></svg><svg class="x" style="left:374px;top:128.8px;font-size:12px;color:#fff;" width="25.5" height="1"><text x="0" textLength="25.5">BUY</text></svg><svg class="x b" style="left:214.57px;top:168.2px;font-size:11.5px;color:#fff;font-weight:bold;" width="23.73" height="1"><text x="0" textLength="23.73">1.17</text></svg><svg class="x" style="left:242px;top:167.8px;font-size:31px;color:#fff;" width="33.7" height="1"><text x="0" textLength="33.7">25</text></svg><svg class="x b" style="left:281.5px;top:154.6px;font-size:11px;color:#fff;font-weight:bold;" width="6.12" height="1"><text x="0" textLength="6.12">3</text></svg><svg class="x b" style="left:324.57px;top:168.2px;font-size:11.5px;color:#fff;font-weight:bold;" width="23.73" height="1"><text x="0" textLength="23.73">1.17</text></svg><svg class="x" style="left:352px;top:167.8px;font-size:31px;color:#fff;" width="33.7" height="1"><text x="0" textLength="33.7">27</text></svg><svg class="x b" style="left:391.5px;top:154.6px;font-size:11px;color:#fff;font-weight:bold;" width="6.12" height="1"><text x="0" textLength="6.12">1</text></svg><div class="a" style="left:585px;top:61px;width:402px;height:214px;background:#f0f0f0;"></div><div class="a" style="left:585px;top:275px;width:402px;height:2px;background:linear-gradient(#8a8a8a,#5f5f5f);"></div><svg class="a" style="left:593px;top:66px;" width="17" height="17" viewBox="0 0 17 17"><rect x="0.500" y="0.500" width="12.500" height="11" fill="#fff" stroke="#3f86e0"/><rect x="0.500" y="0.500" width="12.500" height="2.600" fill="#2f7fe6" stroke="#2f7fe6"/><path d="M1 6h3M1 9h3M2.500 4v7" stroke="#f0b8a0" stroke-width=".6"/><rect x="3.500" y="4.500" width="12.500" height="11.500" fill="#fff" stroke="#2f7fe6"/><rect x="3.500" y="4.500" width="12.500" height="3" fill="#2f7fe6" stroke="#2f7fe6"/><path d="M4 6.200h11.500" stroke="#8fc0f8" stroke-width=".8"/><path d="M7.200 8.500v7M10.700 8.500v7M14 8.500v7M4 11h12M4 13.500h12" stroke="#d5e3f5" stroke-width=".6" fill="none"/><path d="M5.300 13.500L7.300 11.300L9 12.600L11.300 9.800L12.500 11.200L14.500 9.300" stroke="#ff4a1a" stroke-width="1.400" fill="none"/></svg><svg class="x" style="left:612.4px;top:77.9px;font-size:12.6px;color:#8a8a8a;" width="68" height="1"><text x="0" textLength="68">GBPUSD,H1</text></svg><svg class="a" style="left:404px;top:0px;" width="600" height="100" viewBox="0 0 600 100"><path d="M490 77h8.500" stroke="#8a8a8a" stroke-width="1.5"/><rect x="522.800" y="69.800" width="8.600" height="8.200" fill="none" stroke="#8a8a8a" stroke-width="1.3"/><path d="M557.500 69.500l8 8.500M565.500 69.500l-8 8.500" stroke="#8a8a8a" stroke-width="1.6" fill="none"/></svg><div class="a" style="left:590px;top:88px;width:392px;height:181px;background:#000;border-left:1px solid #6e6e6e;border-top:1px solid #6e6e6e;border-right:1px solid #c8c8c8;border-bottom:1px solid #e8e8e8;"></div><svg class="a" style="left:0;top:0" width="1134" height="468" viewBox="0 0 1134 468"><path d="M594.5 194.2V92.5H927.5V194.2M594.5 247.5V196.8H927.5V247.5" stroke="#fff" stroke-width="1" fill="none"/><path d="M594.5 194.2H927.5" stroke="#fff" stroke-width="1"/><path d="M594.5 247.5H927.5" stroke="#fff" stroke-width="1"/><path d="M625.9 93V194M625.9 197V247M658 93V194M658 197V247M690.1 93V194M690.1 197V247M722.2 93V194M722.2 197V247M754.3 93V194M754.3 197V247M786.4 93V194M786.4 197V247M818.5 93V194M818.5 197V247M850.6 93V194M850.6 197V247M882.7 93V194M882.7 197V247M914.8 93V194M914.8 197V247M594.5 98.3H927.5M594.5 130.4H927.5M594.5 162.5H927.5" stroke="#778899" stroke-width="1" stroke-dasharray="3 2.500" fill="none"/><path d="M594.5 205.200H927.5M594.5 218.500H927.5M594.5 232.300H927.5" stroke="#778899" stroke-dasharray="3 2.500" fill="none"/><path d="M826.5 137.95V155.14M834.5 140.24V156.29M842.5 142.53V157.43M850.5 141.38V149.41M858.5 139.09V145.97M866.5 139.09V159.72M874.5 137.95V158.58M882.5 134.51V155.14M890.5 152.85V172.33M898.5 165.46V172.33M906.5 160.87V174.63M914.5 168.9V189.07" stroke="#00ff00" stroke-width="1" fill="none"/><path d="M832.2 141.38h4.6v12.15h-4.6zM848.2 142.07h4.6v6.19h-4.6zM856.2 142.53h4.6v1h-4.6zM872.2 141.38h4.6v16.05h-4.6zM896.2 165.91h4.6v5.27h-4.6z" stroke="#00ff00" stroke-width="1" fill="#000"/><path d="M824.2 145.28h4.6v8.25h-4.6zM840.2 143.68h4.6v3.44h-4.6zM864.2 142.53h4.6v15.59h-4.6zM880.2 142.53h4.6v10.32h-4.6zM888.2 153.31h4.6v17.42h-4.6zM904.2 167.29h4.6v3.9h-4.6zM912.2 172.33h4.6v5.73h-4.6z" stroke="#00ff00" stroke-width="1" fill="#fff"/><path d="M786.5 104.7V111.6M595.5 139.5V141.5M802.5 180V184.6M819.5 144V151M595.500 169V171" stroke="#00ff00"/><path d="M595.32 212.55L605.63 212.78L621.68 217.83L642.31 226.31L652.63 226.31L658.36 225.16L666.38 214.39L674.41 210.95L690.46 225.39L698.48 214.39L707.65 209.12L722.55 210.03L738.14 200.17L743.18 202.93L754.65 217.83L762.67 214.39L770.69 217.83L778.72 227.68L786.74 218.97L795 236.17L794.17 235.02L802.19 240.06L818.24 218.97L826.27 219.43L834.29 216.22L842.31 218.97L850.34 207.05L858.36 203.38L866.38 222.41L874.41 210.49L882.43 213.24L890.46 241.44L898.48 239.15L906.5 237.31L914.53 243.04" stroke="#20b2aa" stroke-width="1.1" fill="none"/><path d="M594.5 247.5v4M658.7 247.5v4M722.9 247.5v4M787.1 247.5v4M851.3 247.5v4M915.5 247.5v4" stroke="#fff" stroke-width="1"/><path d="M927.5 98.3h4M927.5 130.4h4M927.5 162.5h4" stroke="#fff" stroke-width="1"/><path d="M819 178.5H927.5" stroke="#7c8a99" stroke-width="1"/><path d="M927.5 197h4M927.5 205.200h4M927.5 218.500h4M927.5 232.300h4M927.5 246.500h4" stroke="#fff"/></svg><svg class="a" style="left:598.500px;top:95.800px;" width="32" height="12" viewBox="0 0 32 12"><rect x="0.500" y="0.500" width="13" height="11" fill="#fff" stroke="#e0e0ee"/><rect x="0" y="0" width="14" height="2" fill="#a0a0f0"/><rect x="1.5" y="4" width="5" height="1.2" fill="#e05050"/><rect x="7.5" y="4" width="5" height="1.2" fill="#6868e0"/><rect x="1.5" y="6" width="5" height="1.2" fill="#e05050"/><rect x="7.5" y="6" width="5" height="1.2" fill="#6868e0"/><rect x="1.5" y="8" width="5" height="1.2" fill="#e05050"/><rect x="7.5" y="8" width="5" height="1.2" fill="#6868e0"/><rect x="1.5" y="10" width="5" height="1.2" fill="#e05050"/><rect x="7.5" y="10" width="5" height="1.2" fill="#6868e0"/><rect x="17" y="1" width="7" height="10.500" fill="#4646e6"/><rect x="24" y="1" width="7" height="10.500" fill="#d23a3a"/><path d="M17 7.500h3.500v4h-3.500z" fill="#7070f0"/><path d="M27.500 3.500h3.500v3h-3.500z" fill="#e06060"/><rect x="20.500" y="0.800" width="7" height="2.400" fill="#c9c9c9" stroke="#8a8a8a" stroke-width=".5"/><rect x="23.200" y="3.200" width="1.800" height="8.300" fill="#a8a8a8"/></svg><svg class="x" style="left:635.8px;top:106px;font-size:10px;color:#fff;" width="176" height="1"><text x="0" textLength="176">GBPUSD, H1:  British Pound vs US Dollar</text></svg><svg class="x" style="left:593.8px;top:259.9px;font-size:9.6px;color:#fff;" width="51.3" height="1"><text x="0" textLength="51.3">28 Sep 2020</text></svg><svg class="x" style="left:658px;top:259.9px;font-size:9.6px;color:#fff;" width="53.82" height="1"><text x="0" textLength="53.82">28 Sep 22:00</text></svg><svg class="x" style="left:722.2px;top:259.9px;font-size:9.6px;color:#fff;" width="53.82" height="1"><text x="0" textLength="53.82">29 Sep 06:00</text></svg><svg class="x" style="left:786.4px;top:259.9px;font-size:9.6px;color:#fff;" width="53.82" height="1"><text x="0" textLength="53.82">29 Sep 14:00</text></svg><svg class="x" style="left:850.6px;top:259.9px;font-size:9.6px;color:#fff;" width="53.82" height="1"><text x="0" textLength="53.82">29 Sep 22:00</text></svg><svg class="x" style="left:914.8px;top:259.9px;font-size:9.6px;color:#fff;" width="53.82" height="1"><text x="0" textLength="53.82">30 Sep 06:00</text></svg><svg class="x" style="left:933.2px;top:101.8px;font-size:9.6px;color:#fff;" width="32.05" height="1"><text x="0" textLength="32.05">1.29080</text></svg><svg class="x" style="left:933.2px;top:133.9px;font-size:9.6px;color:#fff;" width="32.05" height="1"><text x="0" textLength="32.05">1.28760</text></svg><svg class="x" style="left:933.2px;top:166px;font-size:9.6px;color:#fff;" width="32.05" height="1"><text x="0" textLength="32.05">1.28440</text></svg><div class="a" style="left:930.100px;top:172.800px;width:39.200px;height:11.200px;background:#8392a3;"></div><svg class="x" style="left:933.2px;top:182.3px;font-size:9.6px;" width="32.05" height="1"><text x="0" textLength="32.05">1.28283</text></svg><svg class="x" style="left:933.2px;top:205.3px;font-size:9.6px;color:#fff;" width="27.12" height="1"><text x="0" textLength="27.12">163.28</text></svg><svg class="x" style="left:933.2px;top:208.7px;font-size:9.6px;color:#fff;" width="27.12" height="1"><text x="0" textLength="27.12">100.00</text></svg><svg class="x" style="left:933.2px;top:221.3px;font-size:9.6px;color:#fff;" width="17.25" height="1"><text x="0" textLength="17.25">0.00</text></svg><svg class="x" style="left:933.2px;top:236.1px;font-size:9.6px;color:#fff;" width="30.07" height="1"><text x="0" textLength="30.07">-100.00</text></svg><svg class="x" style="left:933.2px;top:245.1px;font-size:9.6px;color:#fff;" width="30.07" height="1"><text x="0" textLength="30.07">-210.22</text></svg><div class="a" style="left:598px;top:200.800px;width:67.500px;height:9px;background:#000;"></div><svg class="x" style="left:598.3px;top:208.3px;font-size:9.6px;color:#fff;" width="67" height="1"><text x="0" textLength="67">CCI(14) -177.80</text></svg><div class="a" style="left:598px;top:113.500px;width:52px;height:24px;background:linear-gradient(#5252ee,#3b3be0);"></div><div class="a" style="left:766px;top:113.500px;width:50.600px;height:24px;background:linear-gradient(#5252ee,#3b3be0);"></div><div class="a" style="left:598px;top:137px;width:108.500px;height:40.800px;background:linear-gradient(#3030dc,#1c1cc8 45%,#0606a6);"></div><div class="a" style="left:709.300px;top:137px;width:107.300px;height:40.800px;background:linear-gradient(#3030dc,#1c1cc8 45%,#0606a6);"></div><div class="a" style="left:601px;top:136.600px;width:45px;height:1px;background:#9a9af4;"></div><div class="a" style="left:770px;top:136.600px;width:45px;height:1px;background:#9a9af4;"></div><div class="a" style="left:816.600px;top:113px;width:3.200px;height:65px;background:#000;"></div><div class="a" style="left:652px;top:113px;width:111px;height:22px;background:#fff;border:1px solid #8a8a8a;"></div><div class="a" style="left:653px;top:114px;width:20.500px;height:20px;background:linear-gradient(#f4f4f4,#d4d4d4);border-right:1px solid #9a9a9a;"></div><div class="a" style="left:741.500px;top:114px;width:20.500px;height:20px;background:linear-gradient(#f4f4f4,#d4d4d4);border-left:1px solid #9a9a9a;"></div><svg class="a" style="left:660.500px;top:122px;" width="6" height="4" viewBox="0 0 6 4"><path d="M0 0h6l-3 3.500z" fill="#3a5a9a"/></svg><svg class="a" style="left:749px;top:122px;" width="6" height="4" viewBox="0 0 6 4"><path d="M0 3.500h6l-3-3.500z" fill="#3a5a9a"/></svg><svg class="x" style="left:714.5px;top:129px;font-size:12px;" width="23" height="1"><text x="0" textLength="23">0.01</text></svg><svg class="x" style="left:610.2px;top:128.8px;font-size:12px;color:#fff;" width="26" height="1"><text x="0" textLength="26">SELL</text></svg><svg class="x" style="left:778px;top:128.8px;font-size:12px;color:#fff;" width="25.5" height="1"><text x="0" textLength="25.5">BUY</text></svg><svg class="x b" style="left:618.57px;top:168.2px;font-size:11.5px;color:#fff;font-weight:bold;" width="23.73" height="1"><text x="0" textLength="23.73">1.28</text></svg><svg class="x" style="left:646px;top:167.8px;font-size:31px;color:#fff;" width="33.7" height="1"><text x="0" textLength="33.7">28</text></svg><svg class="x b" style="left:685.5px;top:154.6px;font-size:11px;color:#fff;font-weight:bold;" width="6.12" height="1"><text x="0" textLength="6.12">3</text></svg><svg class="x b" style="left:728.57px;top:168.2px;font-size:11.5px;color:#fff;font-weight:bold;" width="23.73" height="1"><text x="0" textLength="23.73">1.28</text></svg><svg class="x" style="left:756px;top:167.8px;font-size:31px;color:#fff;" width="33.7" height="1"><text x="0" textLength="33.7">30</text></svg><svg class="x b" style="left:795.5px;top:154.6px;font-size:11px;color:#fff;font-weight:bold;" width="6.12" height="1"><text x="0" textLength="6.12">8</text></svg><div class="a" style="left:181px;top:277px;width:402px;height:191px;background:#f0f0f0;"></div><div class="a" style="left:583px;top:276px;width:2px;height:194px;background:linear-gradient(to right,#7a7a7a,#5a5a5a);"></div><svg class="a" style="left:189px;top:282px;" width="17" height="17" viewBox="0 0 17 17"><rect x="0.500" y="0.500" width="12.500" height="11" fill="#fff" stroke="#3f86e0"/><rect x="0.500" y="0.500" width="12.500" height="2.600" fill="#2f7fe6" stroke="#2f7fe6"/><path d="M1 6h3M1 9h3M2.500 4v7" stroke="#f0b8a0" stroke-width=".6"/><rect x="3.500" y="4.500" width="12.500" height="11.500" fill="#fff" stroke="#2f7fe6"/><rect x="3.500" y="4.500" width="12.500" height="3" fill="#2f7fe6" stroke="#2f7fe6"/><path d="M4 6.200h11.500" stroke="#8fc0f8" stroke-width=".8"/><path d="M7.200 8.500v7M10.700 8.500v7M14 8.500v7M4 11h12M4 13.500h12" stroke="#d5e3f5" stroke-width=".6" fill="none"/><path d="M5.300 13.500L7.300 11.300L9 12.600L11.300 9.800L12.500 11.200L14.500 9.300" stroke="#ff4a1a" stroke-width="1.400" fill="none"/></svg><svg class="x" style="left:208.4px;top:293.9px;font-size:12.6px;color:#8a8a8a;" width="66.02" height="1"><text x="0" textLength="66.02">USDCHF,H1</text></svg><svg class="a" style="left:0px;top:216px;" width="600" height="100" viewBox="0 0 600 100"><path d="M490 77h8.500" stroke="#8a8a8a" stroke-width="1.5"/><rect x="522.800" y="69.800" width="8.600" height="8.200" fill="none" stroke="#8a8a8a" stroke-width="1.3"/><path d="M557.500 69.500l8 8.500M565.500 69.500l-8 8.500" stroke="#8a8a8a" stroke-width="1.6" fill="none"/></svg><div class="a" style="left:186px;top:304.500px;width:392px;height:165px;background:#000;border-left:1px solid #6e6e6e;border-top:1px solid #6e6e6e;border-right:1px solid #c8c8c8;border-bottom:1px solid #e8e8e8;"></div><svg class="a" style="left:0;top:0" width="1134" height="468" viewBox="0 0 1134 468"><path d="M190.5 463.5V308.5H523.5V463.5z" stroke="#fff" stroke-width="1" fill="none"/><path d="M221.9 309V463M254 309V463M286.1 309V463M318.2 309V463M350.3 309V463M382.4 309V463M414.5 309V463M446.6 309V463M478.7 309V463M510.8 309V463M190.5 335.8H523.5M190.5 367.6H523.5M190.5 399.5H523.5M190.5 431.4H523.5" stroke="#778899" stroke-width="1" stroke-dasharray="3 2.500" fill="none"/><path d="M419.5 386.88V393.76M419.5 391.69h-2M419.5 388.94h2M422.5 385.73V401.78M422.5 389.74h-2M422.5 397.77h2M427.5 383.44V399.49M427.5 394.67h-2M427.5 388.25h2M430.5 385.73V406.36M430.5 390.89h-2M430.5 401.21h2M435.5 401.78V415.53M435.5 411.41h-2M435.5 405.91h2M439.5 398.34V416.68M439.5 402.93h-2M439.5 412.1h2M443.5 413.24V427M443.5 422.87h-2M443.5 417.37h2M447.5 407.51V423.56M447.5 411.52h-2M447.5 419.55h2M451.5 413.24V443.04M451.5 434.1h-2M451.5 422.18h2M455.5 418.97V454.51M455.5 427.86h-2M455.5 445.62h2M459.5 417.83V438.46M459.5 432.27h-2M459.5 424.02h2M463.5 416.68V456.8M463.5 426.71h-2M463.5 446.77h2M467.5 444.19V453.36M467.5 450.61h-2M467.5 446.94h2M471.5 445.34V456.8M471.5 448.2h-2M471.5 453.93h2M475.5 445.34V454.51M475.5 451.76h-2M475.5 448.09h2M479.5 444.19V456.8M479.5 447.34h-2M479.5 453.65h2M483.5 441.9V448.78M483.5 446.71h-2M483.5 443.96h2M487.5 443.04V455.65M487.5 446.2h-2M487.5 452.5h2M491.5 448.78V455.65M491.5 453.59h-2M491.5 450.84h2M495.5 439.61V455.65M495.5 443.62h-2M495.5 451.64h2M499.5 441.9V449.92M499.5 447.51h-2M499.5 444.31h2M503.5 438.46V451.07M503.5 441.61h-2M503.5 447.92h2M507.5 422.41V443.04M507.5 436.85h-2M507.5 428.6h2M511.5 427V437.31M511.5 429.58h-2M511.5 434.73h2M515.5 428.14V435.02M515.5 432.96h-2M515.5 430.21h2M519.5 429.29V435.02M519.5 430.72h-2M519.5 433.59h2" stroke="#00ff00" stroke-width="1" fill="none"/><path d="M394.500 395v4M398.500 396v2M402.500 396v3M409.500 396v2M413.500 395v3" stroke="#00ff00"/><path d="M270.500 322v6M273.500 323v5M277.500 322v6M281.500 324v4M285.500 323v4M302.500 326v2M306.500 326v2M322.500 322v6M326.500 323v5M330.500 322v6" stroke="#00ff00"/><path d="M415.12 388.02L422 390.32L430.02 392.61L436.9 396.05L443.78 399.49L450.65 405.22L457.53 408.66L462.12 413.24L471.29 422.41L480.46 431.58L489.63 438.46L498.8 443.04L507.97 443.04L514.84 444.19L518.28 441.9" stroke="#ff0000" stroke-width="0.95" fill="none"/><path d="M190.5 463.5v4M254.7 463.5v4M318.9 463.5v4M383.1 463.5v4M447.3 463.5v4M511.5 463.5v4" stroke="#fff" stroke-width="1"/><path d="M523.5 335.8h4M523.5 367.6h4M523.5 399.5h4" stroke="#fff" stroke-width="1"/><path d="M190.5 430.3H523.5" stroke="#7c8a99" stroke-width="1"/></svg><svg class="a" style="left:194.500px;top:311.800px;" width="32" height="12" viewBox="0 0 32 12"><rect x="0.500" y="0.500" width="13" height="11" fill="#fff" stroke="#e0e0ee"/><rect x="0" y="0" width="14" height="2" fill="#a0a0f0"/><rect x="1.5" y="4" width="5" height="1.2" fill="#e05050"/><rect x="7.5" y="4" width="5" height="1.2" fill="#6868e0"/><rect x="1.5" y="6" width="5" height="1.2" fill="#e05050"/><rect x="7.5" y="6" width="5" height="1.2" fill="#6868e0"/><rect x="1.5" y="8" width="5" height="1.2" fill="#e05050"/><rect x="7.5" y="8" width="5" height="1.2" fill="#6868e0"/><rect x="1.5" y="10" width="5" height="1.2" fill="#e05050"/><rect x="7.5" y="10" width="5" height="1.2" fill="#6868e0"/><rect x="17" y="1" width="7" height="10.500" fill="#4646e6"/><rect x="24" y="1" width="7" height="10.500" fill="#d23a3a"/><path d="M17 7.500h3.500v4h-3.500z" fill="#7070f0"/><path d="M27.500 3.500h3.500v3h-3.500z" fill="#e06060"/><rect x="20.500" y="0.800" width="7" height="2.400" fill="#c9c9c9" stroke="#8a8a8a" stroke-width=".5"/><rect x="23.200" y="3.200" width="1.800" height="8.300" fill="#a8a8a8"/></svg><svg class="x" style="left:231.8px;top:322px;font-size:10px;color:#fff;" width="172.5" height="1"><text x="0" textLength="172.5">USDCHF, H1:  US Dollar vs Swiss Franc</text></svg><svg class="x" style="left:529.2px;top:339.3px;font-size:9.6px;color:#fff;" width="32.05" height="1"><text x="0" textLength="32.05">0.92840</text></svg><svg class="x" style="left:529.2px;top:371.1px;font-size:9.6px;color:#fff;" width="32.05" height="1"><text x="0" textLength="32.05">0.92590</text></svg><svg class="x" style="left:529.2px;top:403px;font-size:9.6px;color:#fff;" width="32.05" height="1"><text x="0" textLength="32.05">0.92340</text></svg><div class="a" style="left:526.100px;top:424.600px;width:39.200px;height:11.200px;background:#8392a3;"></div><svg class="x" style="left:529.2px;top:434.1px;font-size:9.6px;" width="32.05" height="1"><text x="0" textLength="32.05">0.92097</text></svg><div class="a" style="left:194px;top:329.500px;width:52px;height:24px;background:linear-gradient(#5252ee,#3b3be0);"></div><div class="a" style="left:362px;top:329.500px;width:50.600px;height:24px;background:linear-gradient(#5252ee,#3b3be0);"></div><div class="a" style="left:194px;top:353px;width:108.500px;height:40.800px;background:linear-gradient(#3030dc,#1c1cc8 45%,#0606a6);"></div><div class="a" style="left:305.300px;top:353px;width:107.300px;height:40.800px;background:linear-gradient(#3030dc,#1c1cc8 45%,#0606a6);"></div><div class="a" style="left:197px;top:352.600px;width:45px;height:1px;background:#9a9af4;"></div><div class="a" style="left:366px;top:352.600px;width:45px;height:1px;background:#9a9af4;"></div><div class="a" style="left:412.600px;top:329px;width:3.200px;height:65px;background:#000;"></div><div class="a" style="left:248px;top:329px;width:111px;height:22px;background:#fff;border:1px solid #8a8a8a;"></div><div class="a" style="left:249px;top:330px;width:20.500px;height:20px;background:linear-gradient(#f4f4f4,#d4d4d4);border-right:1px solid #9a9a9a;"></div><div class="a" style="left:337.500px;top:330px;width:20.500px;height:20px;background:linear-gradient(#f4f4f4,#d4d4d4);border-left:1px solid #9a9a9a;"></div><svg class="a" style="left:256.500px;top:338px;" width="6" height="4" viewBox="0 0 6 4"><path d="M0 0h6l-3 3.500z" fill="#3a5a9a"/></svg><svg class="a" style="left:345px;top:338px;" width="6" height="4" viewBox="0 0 6 4"><path d="M0 3.500h6l-3-3.500z" fill="#3a5a9a"/></svg><svg class="x" style="left:310.5px;top:345px;font-size:12px;" width="23" height="1"><text x="0" textLength="23">0.01</text></svg><svg class="x" style="left:206.2px;top:344.8px;font-size:12px;color:#fff;" width="26" height="1"><text x="0" textLength="26">SELL</text></svg><svg class="x" style="left:374px;top:344.8px;font-size:12px;color:#fff;" width="25.5" height="1"><text x="0" textLength="25.5">BUY</text></svg><svg class="x b" style="left:214.57px;top:384.2px;font-size:11.5px;color:#fff;font-weight:bold;" width="23.73" height="1"><text x="0" textLength="23.73">0.92</text></svg><svg class="x" style="left:242px;top:383.8px;font-size:31px;color:#fff;" width="33.7" height="1"><text x="0" textLength="33.7">09</text></svg><svg class="x b" style="left:281.5px;top:370.6px;font-size:11px;color:#fff;font-weight:bold;" width="6.12" height="1"><text x="0" textLength="6.12">7</text></svg><svg class="x b" style="left:324.57px;top:384.2px;font-size:11.5px;color:#fff;font-weight:bold;" width="23.73" height="1"><text x="0" textLength="23.73">0.92</text></svg><svg class="x" style="left:352px;top:383.8px;font-size:31px;color:#fff;" width="33.7" height="1"><text x="0" textLength="33.7">12</text></svg><svg class="x b" style="left:391.5px;top:370.6px;font-size:11px;color:#fff;font-weight:bold;" width="6.12" height="1"><text x="0" textLength="6.12">5</text></svg><div class="a" style="left:585px;top:277px;width:402px;height:191px;background:#f0f0f0;"></div><svg class="a" style="left:593px;top:282px;" width="17" height="17" viewBox="0 0 17 17"><rect x="0.500" y="0.500" width="12.500" height="11" fill="#fff" stroke="#3f86e0"/><rect x="0.500" y="0.500" width="12.500" height="2.600" fill="#2f7fe6" stroke="#2f7fe6"/><path d="M1 6h3M1 9h3M2.500 4v7" stroke="#f0b8a0" stroke-width=".6"/><rect x="3.500" y="4.500" width="12.500" height="11.500" fill="#fff" stroke="#2f7fe6"/><rect x="3.500" y="4.500" width="12.500" height="3" fill="#2f7fe6" stroke="#2f7fe6"/><path d="M4 6.200h11.500" stroke="#8fc0f8" stroke-width=".8"/><path d="M7.200 8.500v7M10.700 8.500v7M14 8.500v7M4 11h12M4 13.500h12" stroke="#d5e3f5" stroke-width=".6" fill="none"/><path d="M5.300 13.500L7.300 11.300L9 12.600L11.300 9.800L12.500 11.200L14.500 9.300" stroke="#ff4a1a" stroke-width="1.400" fill="none"/></svg><svg class="x" style="left:612.4px;top:293.9px;font-size:12.6px;color:#8a8a8a;" width="63.21" height="1"><text x="0" textLength="63.21">USDJPY,H1</text></svg><svg class="a" style="left:404px;top:216px;" width="600" height="100" viewBox="0 0 600 100"><path d="M490 77h8.500" stroke="#8a8a8a" stroke-width="1.5"/><rect x="522.800" y="69.800" width="8.600" height="8.200" fill="none" stroke="#8a8a8a" stroke-width="1.3"/><path d="M557.500 69.500l8 8.500M565.500 69.500l-8 8.500" stroke="#8a8a8a" stroke-width="1.6" fill="none"/></svg><div class="a" style="left:590px;top:304.500px;width:392px;height:165px;background:#000;border-left:1px solid #6e6e6e;border-top:1px solid #6e6e6e;border-right:1px solid #c8c8c8;border-bottom:1px solid #e8e8e8;"></div><svg class="a" style="left:0;top:0" width="1134" height="468" viewBox="0 0 1134 468"><path d="M594.5 410.3V308.5H927.5V410.3M594.5 463.5V413.2H927.5V463.5" stroke="#fff" stroke-width="1" fill="none"/><path d="M594.5 410.3H927.5" stroke="#fff" stroke-width="1"/><path d="M594.5 463.5H927.5" stroke="#fff" stroke-width="1"/><path d="M625.9 309V410M625.9 414V463M658 309V410M658 414V463M690.1 309V410M690.1 414V463M722.2 309V410M722.2 414V463M754.3 309V410M754.3 414V463M786.4 309V410M786.4 414V463M818.5 309V410M818.5 414V463M850.6 309V410M850.6 414V463M882.7 309V410M882.7 414V463M914.8 309V410M914.8 414V463M594.5 314.7H927.5M594.5 346.6H927.5M594.5 378.6H927.5" stroke="#778899" stroke-width="1" stroke-dasharray="3 2.500" fill="none"/><path d="M823.5 352.95V355.24M823.5 354.55h-2M823.5 353.63h2M826.5 335.06V354.09M826.5 339.82h-2M826.5 349.34h2M830.5 334.61V356.38M830.5 349.85h-2M830.5 341.14h2M834.5 331.17V359.82M834.5 338.33h-2M834.5 352.66h2M838.5 338.04V357.53M838.5 351.69h-2M838.5 343.89h2M842.5 341.48V352.95M842.5 344.35h-2M842.5 350.08h2M846.5 342.63V351.8M846.5 349.05h-2M846.5 345.38h2M850.5 338.04V348.36M850.5 340.62h-2M850.5 345.78h2M854.5 339.19V358.68M854.5 352.83h-2M854.5 345.04h2M858.5 336.9V358.68M858.5 342.34h-2M858.5 353.23h2M862.5 335.75V350.65M862.5 346.18h-2M862.5 340.22h2M866.5 334.61V344.92M866.5 337.18h-2M866.5 342.34h2M870.5 340.34V346.53M870.5 344.67h-2M870.5 342.19h2M874.5 336.9V342.63M874.5 338.33h-2M874.5 341.2h2M878.5 336.9V343.78M878.5 341.71h-2M878.5 338.96h2M882.5 339.19V346.07M882.5 340.91h-2M882.5 344.35h2M886.5 338.04V344.92M886.5 342.86h-2M886.5 340.11h2M890.5 340.34V344.92M890.5 341.48h-2M890.5 343.78h2M894.5 339.19V343.78M894.5 342.4h-2M894.5 340.57h2M898.5 322V343.78M898.5 327.44h-2M898.5 338.33h2M902.5 320.85V340.34M902.5 334.49h-2M902.5 326.7h2M907.5 331.17V354.09M907.5 336.9h-2M907.5 348.36h2M910.5 343.78V352.95M910.5 350.19h-2M910.5 346.53h2M915.5 346.07V365.55M915.5 350.94h-2M915.5 360.68h2M918.5 360.97V368.99M918.5 366.59h-2M918.5 363.38h2M923.5 365.55V374.72M923.5 367.85h-2M923.5 372.43h2" stroke="#00ff00" stroke-width="1" fill="none"/><path d="M819.500 355.500h2" stroke="#00ff00"/><path d="M642.500 400v5M646.500 400v5M726.500 398v3M730.500 398v3M743.500 397v1" stroke="#00ff00"/><path d="M595 443.2H927" stroke="#8494a6" stroke-dasharray="3.200 2.800" fill="none"/><path d="M597.5 443.2V427.27M601.5 443.2V427.27M605.5 443.2V427.27M610.5 443.2V427.27M614.5 443.2V427.27M618.5 443.2V427.27M621.5 443.2V427.27M626.5 443.2V427.27M630.5 443.2V428.11M633.5 443.2V429.78M638.5 443.2V433.13M641.5 443.2V439.84M646.5 443.2V440.67M650.5 443.2V439.84M654.5 443.2V437.32M658.5 443.2V433.13M662.5 443.2V435.65M666.5 443.2V433.13M670.5 443.2V428.95M674.5 443.2V427.27M678.5 443.2V427.27M682.5 443.2V427.27M686.5 443.2V427.27M690.5 443.2V427.27M694.5 443.2V427.27M698.5 443.2V427.27M702.5 443.2V428.11M706.5 443.2V428.95M710.5 443.2V431.46M714.5 443.2V438.16M718.5 443.2V442.35M722.5 443.2V453.24M726.5 443.2V454.08M730.5 443.2V454.92M734.5 443.2V456.59M738.5 443.2V457.43M742.5 443.2V458.27M746.5 443.2V459.11M750.5 443.2V457.43M754.5 443.2V454.08M758.5 443.2V447.38M762.5 443.2V440.67M766.5 443.2V439M770.5 443.2V436.49M774.5 443.2V434.81M778.5 443.2V433.97M782.5 443.2V434.81M786.5 443.2V435.65M790.5 443.2V434.81M794.5 443.2V433.97M798.5 443.2V439M802.5 443.2V439.84M806.5 443.2V440.67M810.5 443.2V440.67M814.5 443.2V439M818.5 443.2V439M822.5 443.2V435.65M826.5 443.2V430.62M830.5 443.2V429.78M834.5 443.2V426.43M838.5 443.2V426.43M842.5 443.2V426.43M846.5 443.2V424.76M850.5 443.2V422.24M854.5 443.2V426.43M858.5 443.2V424.76M862.5 443.2V423.92M866.5 443.2V423.92M870.5 443.2V423.92M874.5 443.2V422.75M878.5 443.2V423.92M882.5 443.2V424.76M886.5 443.2V424.76M890.5 443.2V424.76M894.5 443.2V423.92M898.5 443.2V422.75M902.5 443.2V423.92M906.5 443.2V425.59M910.5 443.2V428.11M914.5 443.2V435.65M918.5 443.2V441.51M922.5 443.2V447.88" stroke="#c4c4c4" stroke-width="1.100" fill="none"/><path d="M595.86 416.04L605.08 418.39L620.16 422.24L636.08 427.27L643.62 429.78L650.32 432.8L657.02 434.81L663.73 436.82L670.43 436.82L677.13 434.47L683.83 430.62L690.54 427.27L697.24 425.43L707.29 424.76L715.67 426.1L720.7 428.11L727.4 434.81L734.1 442.35L740.8 449.05L747.51 453.24L754.21 455.25L759.24 454.92L765.94 451.9L770 449.89L776.7 446.2L782.57 442.35L786.76 439.84L793.46 436.49L799.32 435.14L806.03 436.49L811.89 437.32L818.59 438.5L825.29 437.83L832 436.49L838.7 434.47L845.4 431.46L852.1 429.45L858.81 427.77L865.51 426.1L872.21 425.26L878.91 425.09L887.29 425.09L895.67 425.09L904.05 425.09L909.08 425.26L914.1 427.27L920.8 430.12" stroke="#ff0000" stroke-width="1.1" fill="none" stroke-dasharray="3 3"/><path d="M594.5 463.5v4M658.7 463.5v4M722.9 463.5v4M787.1 463.5v4M851.3 463.5v4M915.5 463.5v4" stroke="#fff" stroke-width="1"/><path d="M927.5 314.7h4M927.5 346.6h4M927.5 378.6h4" stroke="#fff" stroke-width="1"/><path d="M819 372.6H927.5" stroke="#7c8a99" stroke-width="1"/><path d="M927.5 413.500h4M927.5 443.200h4M927.5 462.500h4" stroke="#fff"/></svg><svg class="a" style="left:598.500px;top:311.800px;" width="32" height="12" viewBox="0 0 32 12"><rect x="0.500" y="0.500" width="13" height="11" fill="#fff" stroke="#e0e0ee"/><rect x="0" y="0" width="14" height="2" fill="#a0a0f0"/><rect x="1.5" y="4" width="5" height="1.2" fill="#e05050"/><rect x="7.5" y="4" width="5" height="1.2" fill="#6868e0"/><rect x="1.5" y="6" width="5" height="1.2" fill="#e05050"/><rect x="7.5" y="6" width="5" height="1.2" fill="#6868e0"/><rect x="1.5" y="8" width="5" height="1.2" fill="#e05050"/><rect x="7.5" y="8" width="5" height="1.2" fill="#6868e0"/><rect x="1.5" y="10" width="5" height="1.2" fill="#e05050"/><rect x="7.5" y="10" width="5" height="1.2" fill="#6868e0"/><rect x="17" y="1" width="7" height="10.500" fill="#4646e6"/><rect x="24" y="1" width="7" height="10.500" fill="#d23a3a"/><path d="M17 7.500h3.500v4h-3.500z" fill="#7070f0"/><path d="M27.500 3.500h3.500v3h-3.500z" fill="#e06060"/><rect x="20.500" y="0.800" width="7" height="2.400" fill="#c9c9c9" stroke="#8a8a8a" stroke-width=".5"/><rect x="23.200" y="3.200" width="1.800" height="8.300" fill="#a8a8a8"/></svg><svg class="x" style="left:635.8px;top:322px;font-size:10px;color:#fff;" width="176" height="1"><text x="0" textLength="176">USDJPY, H1:  US Dollar vs Japanese Yen</text></svg><svg class="x" style="left:933.2px;top:318.2px;font-size:9.6px;color:#fff;" width="32.05" height="1"><text x="0" textLength="32.05">105.840</text></svg><svg class="x" style="left:933.2px;top:350.1px;font-size:9.6px;color:#fff;" width="32.05" height="1"><text x="0" textLength="32.05">105.620</text></svg><svg class="x" style="left:933.2px;top:382.1px;font-size:9.6px;color:#fff;" width="32.05" height="1"><text x="0" textLength="32.05">105.400</text></svg><div class="a" style="left:930.100px;top:366.900px;width:39.200px;height:11.200px;background:#8392a3;"></div><svg class="x" style="left:933.2px;top:376.4px;font-size:9.6px;" width="32.05" height="1"><text x="0" textLength="32.05">105.440</text></svg><svg class="x" style="left:933.2px;top:421.5px;font-size:9.6px;color:#fff;" width="27.12" height="1"><text x="0" textLength="27.12">0.0761</text></svg><svg class="x" style="left:933.2px;top:446.1px;font-size:9.6px;color:#fff;" width="27.12" height="1"><text x="0" textLength="27.12">0.0000</text></svg><svg class="x" style="left:933.2px;top:461.3px;font-size:9.6px;color:#fff;" width="30.07" height="1"><text x="0" textLength="30.07">-0.0472</text></svg><div class="a" style="left:597px;top:417px;width:131.500px;height:9px;background:#000;"></div><svg class="x" style="left:597.5px;top:425px;font-size:9.6px;color:#fff;" width="130.7" height="1"><text x="0" textLength="130.7">MACD(12,26,9) -0.0089 0.0290</text></svg><div class="a" style="left:598px;top:329.500px;width:52px;height:24px;background:linear-gradient(#5252ee,#3b3be0);"></div><div class="a" style="left:766px;top:329.500px;width:50.600px;height:24px;background:linear-gradient(#5252ee,#3b3be0);"></div><div class="a" style="left:598px;top:353px;width:108.500px;height:40.800px;background:linear-gradient(#3030dc,#1c1cc8 45%,#0606a6);"></div><div class="a" style="left:709.300px;top:353px;width:107.300px;height:40.800px;background:linear-gradient(#3030dc,#1c1cc8 45%,#0606a6);"></div><div class="a" style="left:601px;top:352.600px;width:45px;height:1px;background:#9a9af4;"></div><div class="a" style="left:770px;top:352.600px;width:45px;height:1px;background:#9a9af4;"></div><div class="a" style="left:816.600px;top:329px;width:3.200px;height:65px;background:#000;"></div><div class="a" style="left:652px;top:329px;width:111px;height:22px;background:#fff;border:1px solid #8a8a8a;"></div><div class="a" style="left:653px;top:330px;width:20.500px;height:20px;background:linear-gradient(#f4f4f4,#d4d4d4);border-right:1px solid #9a9a9a;"></div><div class="a" style="left:741.500px;top:330px;width:20.500px;height:20px;background:linear-gradient(#f4f4f4,#d4d4d4);border-left:1px solid #9a9a9a;"></div><svg class="a" style="left:660.500px;top:338px;" width="6" height="4" viewBox="0 0 6 4"><path d="M0 0h6l-3 3.500z" fill="#3a5a9a"/></svg><svg class="a" style="left:749px;top:338px;" width="6" height="4" viewBox="0 0 6 4"><path d="M0 3.500h6l-3-3.500z" fill="#3a5a9a"/></svg><svg class="x" style="left:714.5px;top:345px;font-size:12px;" width="23" height="1"><text x="0" textLength="23">0.01</text></svg><svg class="x" style="left:610.2px;top:344.8px;font-size:12px;color:#fff;" width="26" height="1"><text x="0" textLength="26">SELL</text></svg><svg class="x" style="left:778px;top:344.8px;font-size:12px;color:#fff;" width="25.5" height="1"><text x="0" textLength="25.5">BUY</text></svg><svg class="x b" style="left:621.96px;top:384.2px;font-size:11.5px;color:#fff;font-weight:bold;" width="20.34" height="1"><text x="0" textLength="20.34">105</text></svg><svg class="x" style="left:646px;top:383.8px;font-size:31px;color:#fff;" width="33.7" height="1"><text x="0" textLength="33.7">44</text></svg><svg class="x b" style="left:685.5px;top:370.6px;font-size:11px;color:#fff;font-weight:bold;" width="6.12" height="1"><text x="0" textLength="6.12">0</text></svg><svg class="x b" style="left:731.96px;top:384.2px;font-size:11.5px;color:#fff;font-weight:bold;" width="20.34" height="1"><text x="0" textLength="20.34">105</text></svg><svg class="x" style="left:756px;top:383.8px;font-size:31px;color:#fff;" width="33.7" height="1"><text x="0" textLength="33.7">46</text></svg><svg class="x b" style="left:795.5px;top:370.6px;font-size:11px;color:#fff;font-weight:bold;" width="6.12" height="1"><text x="0" textLength="6.12">3</text></svg></div><div class="a" style="left:179px;top:468px;width:955px;height:1px;background:#4a4a4a;"></div><div class="a" style="left:179px;top:468.600px;width:955px;height:2px;background:#000;"></div><div class="a" style="left:179px;top:469px;width:955px;height:22px;background:#f0f0f0;"></div><div class="a" style="left:179px;top:490px;width:955px;height:1px;background:#fdfdfd;"></div><div class="a" style="left:182px;top:468.600px;width:92px;height:22px;background:#fff;border:1px solid #000;border-top:none;"></div><div class="a" style="left:180px;top:468px;width:3px;height:1px;background:#000;"></div><svg class="x" style="left:194.4px;top:485px;font-size:11.6px;" width="67" height="1"><text x="0" textLength="67">EURUSD,H1</text></svg><svg class="x" style="left:285.5px;top:485px;font-size:11.6px;color:#7f7f7f;" width="66" height="1"><text x="0" textLength="66">USDCHF,H1</text></svg><div class="a" style="left:364px;top:473px;width:1px;height:14px;background:#7f7f7f;"></div><svg class="x" style="left:376.5px;top:485px;font-size:11.6px;color:#7f7f7f;" width="67" height="1"><text x="0" textLength="67">GBPUSD,H1</text></svg><div class="a" style="left:456px;top:473px;width:1px;height:14px;background:#7f7f7f;"></div><svg class="x" style="left:467px;top:485px;font-size:11.6px;color:#7f7f7f;" width="62.5" height="1"><text x="0" textLength="62.5">USDJPY,H1</text></svg><div class="a" style="left:0px;top:491px;width:1134px;height:5px;background:#f0f0f0;"></div><div class="a" style="left:0px;top:489px;width:178px;height:1.500px;background:#fbfbfb;"></div><div class="a" style="left:0px;top:491px;width:178px;height:1px;background:#b4b4b4;"></div><div class="a" style="left:0px;top:496px;width:1134px;height:1px;background:#a8a8a8;"></div><div class="a" style="left:0px;top:497px;width:1134px;height:70px;background:#fff;"></div><div class="a" style="left:0px;top:497px;width:1134px;height:22px;background:linear-gradient(#ffffff,#ffffff 30%,#f1f2f6);"></div><div class="a" style="left:0px;top:519px;width:1134px;height:1px;background:#d2d2d2;"></div><div class="a" style="left:660px;top:497px;width:1px;height:70px;background:#dcdcdc;"></div><div class="a" style="left:926px;top:497px;width:1px;height:70px;background:#dcdcdc;"></div><svg class="x" style="left:4.2px;top:513.6px;font-size:11.6px;" width="23.2" height="1"><text x="0" textLength="23.2">项目</text></svg><svg class="x" style="left:666px;top:513.6px;font-size:11.6px;" width="11.6" height="1"><text x="0">从</text></svg><svg class="x" style="left:932px;top:513.6px;font-size:11.6px;" width="11.6" height="1"><text x="0">到</text></svg><div class="a" style="left:0px;top:541px;width:1134px;height:1px;background:#dedede;"></div><div class="a" style="left:0px;top:542px;width:1134px;height:19.500px;background:#ececec;"></div><div class="a" style="left:0px;top:561.500px;width:1134px;height:1px;background:#d4d4d4;"></div><div class="a" style="left:660px;top:541px;width:1px;height:21px;background:#d0d0d0;"></div><div class="a" style="left:926px;top:541px;width:1px;height:21px;background:#d0d0d0;"></div><svg class="a" style="left:2px;top:526px;" width="14" height="11" viewBox="0 0 14 11"><rect x="0.5" y="0.5" width="13" height="10" fill="#f7d560" stroke="#c9a227"/><path d="M1 1L7 6.2L13 1M1 10L5.2 5M13 10L8.8 5" stroke="#b8901c" stroke-width="0.9" fill="none"/><path d="M1 1L7 6L13 1z" fill="#fbe68e" opacity=".7"/></svg><svg class="a" style="left:2px;top:547px;" width="14" height="11" viewBox="0 0 14 11"><rect x="0.5" y="0.5" width="13" height="10" fill="#f7d560" stroke="#c9a227"/><path d="M1 1L7 6.2L13 1M1 10L5.2 5M13 10L8.8 5" stroke="#b8901c" stroke-width="0.9" fill="none"/><path d="M1 1L7 6L13 1z" fill="#fbe68e" opacity=".7"/></svg><svg class="x b" style="left:20.6px;top:536px;font-size:12px;font-weight:bold;" width="270.56" height="1"><text x="0" textLength="144.84">内置虚拟主机——现在可以</text><text x="144.84" textLength="24.06">24/7</text><text x="168.9" textLength="24.14">运行</text><text x="193.04" textLength="17.17">EA</text><text x="210.21" textLength="60.35">交易和信号</text></svg><svg class="x b" style="left:20.6px;top:557px;font-size:12px;font-weight:bold;" width="246" height="1"><text x="0" textLength="132.77">通过自由职业者服务订购</text><text x="132.77" textLength="16.67">EA</text><text x="149.44" textLength="96.56">交易——快速高效</text></svg><svg class="x b" style="left:665.5px;top:535.7px;font-size:12.8px;font-weight:bold;" width="105.5" height="1"><text x="0" textLength="105.5">Trading Platform</text></svg><svg class="x b" style="left:665.5px;top:556.7px;font-size:12.8px;font-weight:bold;" width="105.5" height="1"><text x="0" textLength="105.5">Trading Platform</text></svg><div class="a" style="left:288px;top:30px;width:204px;height:250px;background:rgba(0,0,0,0);box-shadow:0 0 0 rgba(0,0,0,0);"></div><div class="a" style="left:285px;top:27px;width:204px;height:250.500px;background:#f0f0f0;border:1px solid #979797;box-shadow:2.500px 2.500px 2px rgba(0,0,0,.38);"></div><div class="a" style="left:289px;top:54px;width:196px;height:1px;background:#a6a6a6;"></div><div class="a" style="left:289px;top:55px;width:196px;height:1px;background:#fbfbfb;"></div><div class="a" style="left:289px;top:151px;width:196px;height:1px;background:#a6a6a6;"></div><div class="a" style="left:289px;top:152px;width:196px;height:1px;background:#fbfbfb;"></div><div class="a" style="left:289px;top:182.500px;width:196px;height:1px;background:#a6a6a6;"></div><div class="a" style="left:289px;top:183.500px;width:196px;height:1px;background:#fbfbfb;"></div><svg class="x" style="left:316px;top:43.8px;font-size:12px;" width="63" height="1"><text x="0" textLength="48">平铺窗口</text><text x="48" textLength="15">(T)</text></svg><svg class="x" style="left:316px;top:75.5px;font-size:12px;" width="63.5" height="1"><text x="0" textLength="48">层叠窗口</text><text x="48" textLength="15.5">(C)</text></svg><svg class="x" style="left:316px;top:97.3px;font-size:12px;" width="89" height="1"><text x="0" textLength="72">横向平铺窗口</text><text x="72" textLength="17">(H)</text></svg><svg class="x" style="left:316px;top:119.3px;font-size:12px;" width="88" height="1"><text x="0" textLength="72">纵向平铺窗口</text><text x="72" textLength="16">(V)</text></svg><svg class="x" style="left:316px;top:141.3px;font-size:12px;" width="63.5" height="1"><text x="0" textLength="48">排列图标</text><text x="48" textLength="15.5">(A)</text></svg><svg class="x" style="left:316px;top:172px;font-size:12px;" width="36" height="1"><text x="0" textLength="36">分辨率</text></svg><svg class="x" style="left:450.5px;top:43.8px;font-size:12px;" width="31" height="1"><text x="0" textLength="31">Alt+R</text></svg><svg class="x" style="left:316px;top:202.8px;font-size:12px;" width="79" height="1"><text x="0" textLength="79">1 EURUSD,H1</text></svg><svg class="x" style="left:316px;top:224.8px;font-size:12px;" width="78" height="1"><text x="0" textLength="78">2 USDCHF,H1</text></svg><svg class="x" style="left:316px;top:246.8px;font-size:12px;" width="79" height="1"><text x="0" textLength="79">3 GBPUSD,H1</text></svg><svg class="x" style="left:316px;top:268.8px;font-size:12px;" width="74" height="1"><text x="0" textLength="74">4 USDJPY,H1</text></svg><svg class="a" style="left:475px;top:162.500px;" width="5" height="8" viewBox="0 0 5 8"><path d="M0 0l4.500 4l-4.500 4z" fill="#000"/></svg><svg class="a" style="left:298.500px;top:195.500px;" width="8" height="8" viewBox="0 0 8 8"><path d="M0.700 4.200l2.300 2.500l4.200-5.700" stroke="#000" stroke-width="1.900" fill="none"/></svg><svg class="a" style="left:293px;top:32px;" width="16" height="16" viewBox="0 0 16 16"><rect x="0.5" y="0.5" width="6.5" height="6.5" fill="#fff" stroke="#2f7fe6"/><rect x="0.5" y="0.5" width="6.5" height="1.800" fill="#2f7fe6"/><path d="M1.5 5.0l1.5 -2l1.5 1.5l1.5 -2.5" stroke="#2d9a1a" stroke-width="1.200" fill="none"/><rect x="9.0" y="0.5" width="6.5" height="6.5" fill="#fff" stroke="#2f7fe6"/><rect x="9.0" y="0.5" width="6.5" height="1.800" fill="#2f7fe6"/><path d="M10.0 5.0l1.5 -2l1.5 1.5l1.5 -2.5" stroke="#2d9a1a" stroke-width="1.200" fill="none"/><rect x="0.5" y="9.0" width="6.5" height="6.5" fill="#fff" stroke="#2f7fe6"/><rect x="0.5" y="9.0" width="6.5" height="1.800" fill="#2f7fe6"/><path d="M1.5 13.5l1.5 -2l1.5 1.5l1.5 -2.5" stroke="#2d9a1a" stroke-width="1.200" fill="none"/><rect x="9.0" y="9.0" width="6.5" height="6.5" fill="#fff" stroke="#2f7fe6"/><rect x="9.0" y="9.0" width="6.5" height="1.800" fill="#2f7fe6"/><path d="M10.0 13.5l1.5 -2l1.5 1.5l1.5 -2.5" stroke="#2d9a1a" stroke-width="1.200" fill="none"/></svg><svg class="a" style="left:293px;top:64.500px;" width="16" height="16" viewBox="0 0 16 16"><rect x="0.5" y="0.5" width="9" height="7" fill="#fff" stroke="#2f7fe6"/><rect x="0.5" y="0.5" width="9" height="1.800" fill="#2f7fe6"/><rect x="3.0" y="3.5" width="9" height="7" fill="#fff" stroke="#2f7fe6"/><rect x="3.0" y="3.5" width="9" height="1.800" fill="#2f7fe6"/><rect x="5.5" y="6.5" width="10" height="8" fill="#fff" stroke="#2f7fe6"/><rect x="5.5" y="6.5" width="10" height="1.800" fill="#2f7fe6"/><path d="M6.5 12.5l2.6666666666666665 -2l2.6666666666666665 1.5l2.6666666666666665 -2.5" stroke="#2d9a1a" stroke-width="1.200" fill="none"/></svg><svg class="a" style="left:293px;top:86.500px;" width="16" height="16" viewBox="0 0 16 16"><rect x="0.5" y="0.5" width="15" height="6.5" fill="#fff" stroke="#2f7fe6"/><rect x="0.5" y="0.5" width="15" height="1.800" fill="#2f7fe6"/><path d="M1.5 5.0l4.333333333333333 -2l4.333333333333333 1.5l4.333333333333333 -2.5" stroke="#2d9a1a" stroke-width="1.200" fill="none"/><rect x="0.5" y="9.0" width="15" height="6.5" fill="#fff" stroke="#2f7fe6"/><rect x="0.5" y="9.0" width="15" height="1.800" fill="#2f7fe6"/><path d="M1.5 13.5l4.333333333333333 -2l4.333333333333333 1.5l4.333333333333333 -2.5" stroke="#2d9a1a" stroke-width="1.200" fill="none"/></svg><svg class="a" style="left:293px;top:108.500px;" width="16" height="16" viewBox="0 0 16 16"><rect x="0.5" y="0.5" width="6.5" height="15" fill="#fff" stroke="#2f7fe6"/><rect x="0.5" y="0.5" width="6.5" height="1.800" fill="#2f7fe6"/><rect x="9.0" y="0.5" width="6.5" height="15" fill="#fff" stroke="#2f7fe6"/><rect x="9.0" y="0.5" width="6.5" height="1.800" fill="#2f7fe6"/><path d="M2 7l3 4M10.500 11l2-3l2 2" stroke="#2d9a1a" stroke-width="1.300" fill="none"/></svg><svg class="a" style="left:293px;top:129.500px;" width="16" height="17" viewBox="0 0 16 17"><rect x="0.500" y="0.500" width="15" height="13" fill="#f4f4f4" stroke="#b0b0b0"/><rect x="0.500" y="0.500" width="15" height="2" fill="#d0d0d0"/><path d="M0 15.500h4.500M5.800 15.500h4.500M11.500 15.500h4.500" stroke="#2f7fe6" stroke-width="1.600"/><path d="M8 5v5M5.500 8l2.500 2.500l2.500-2.500" stroke="#2f7fe6" stroke-width="1.300" fill="none"/><rect x="0" y="12" width="16" height="1.400" fill="#2f7fe6"/></svg><div class="a" style="left:284px;top:26px;width:205.500px;height:129.500px;border:3.200px solid #f03232;"></div>
</div></body></html>
